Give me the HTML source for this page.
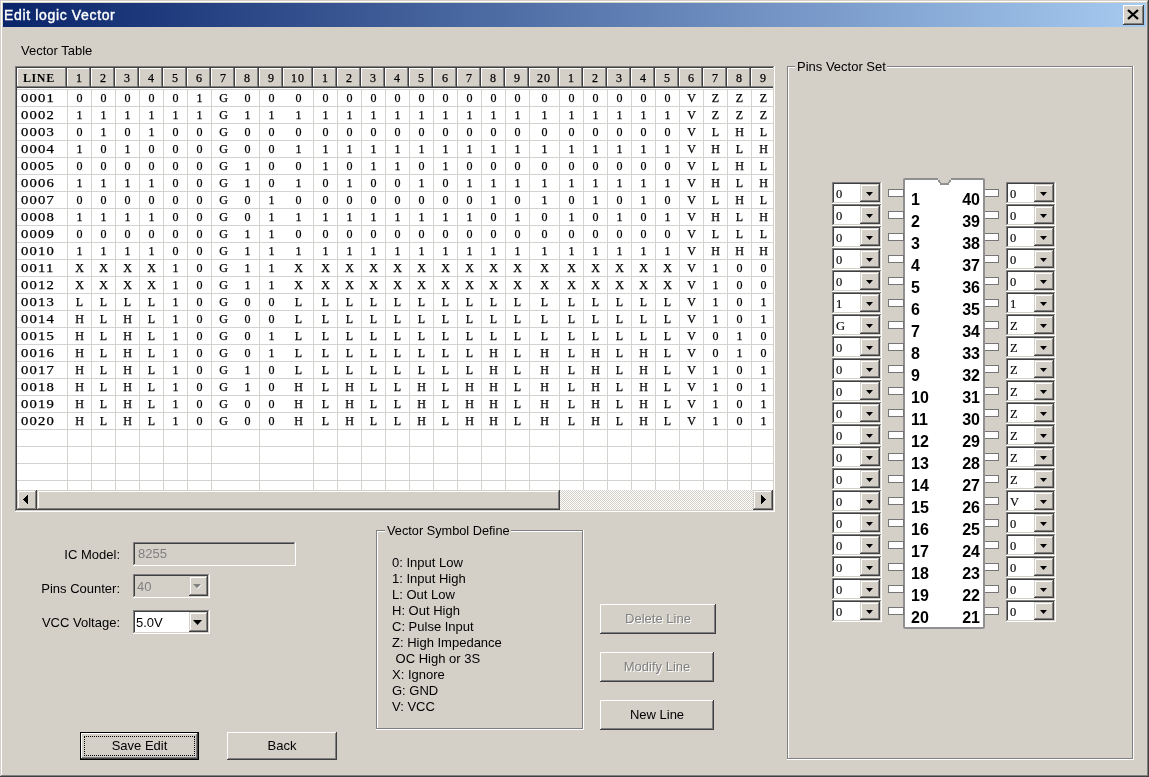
<!DOCTYPE html>
<html><head><meta charset="utf-8"><style>
html,body{margin:0;padding:0;}
body{will-change:transform;width:1149px;height:777px;overflow:hidden;position:relative;background:#d4d0c8;font-family:"Liberation Sans",sans-serif;}
div,svg{position:absolute;box-sizing:border-box;}
.k0{background:#d4d0c8;}
.k1{background:#ffffff;}
.k2{background:#808080;}
.k3{background:#404040;}
.k4{background:linear-gradient(to right,#0a246a,#a6caf0);}
.k5{font-family:'Liberation Sans';font-size:14px;line-height:14px;font-weight:normal;color:#fff;white-space:pre;letter-spacing:0.65px;-webkit-text-stroke:0.4px #fff;}
.k6{font-family:'Liberation Sans';font-size:13px;line-height:13px;font-weight:normal;color:#000;white-space:pre;}
.k7{background:#d3d3d0;}
.k8{font-family:'Liberation Serif';font-size:12px;line-height:12px;font-weight:bold;color:#000;white-space:pre;letter-spacing:0.6px;}
.k9{font-family:'Liberation Serif';font-size:12.0px;line-height:12.0px;font-weight:normal;color:#000;white-space:pre;width:24px;text-align:center;-webkit-text-stroke:0.25px #000;}
.k10{font-family:'Liberation Serif';font-size:12.0px;line-height:12.0px;font-weight:normal;color:#000;white-space:pre;width:30px;text-align:center;letter-spacing:1px;-webkit-text-stroke:0.25px #000;}
.k11{font-family:'Liberation Serif';font-size:12.0px;line-height:12.0px;font-weight:normal;color:#000;white-space:pre;letter-spacing:1.0px;transform:scaleX(1.22);transform-origin:0 0;-webkit-text-stroke:0.25px #000;}
.k12{font-family:'Liberation Serif';font-size:12.0px;line-height:12.0px;font-weight:normal;color:#000;white-space:pre;width:23px;text-align:center;-webkit-text-stroke:0.25px #000;}
.k13{font-family:'Liberation Serif';font-size:12.0px;line-height:12.0px;font-weight:normal;color:#000;white-space:pre;width:29px;text-align:center;-webkit-text-stroke:0.25px #000;}
.k14{background:#000;}
.k15{background:repeating-conic-gradient(#ffffff 0 25%,#d4d0c8 0 50%) 0 0/2px 2px;}
.k16{font-family:'Liberation Sans';font-size:13px;line-height:13px;font-weight:normal;color:#000;white-space:pre;width:120px;text-align:right;}
.k17{font-family:'Liberation Sans';font-size:13px;line-height:13px;font-weight:normal;color:#808080;white-space:pre;}
.k18{font-family:'Liberation Sans';font-size:12.75px;line-height:12.75px;font-weight:normal;color:#000;white-space:pre;}
.k19{font-family:'Liberation Sans';font-size:13px;line-height:13px;font-weight:normal;color:#fff;white-space:pre;width:116px;text-align:center;}
.k20{font-family:'Liberation Sans';font-size:13px;line-height:13px;font-weight:normal;color:#808080;white-space:pre;width:116px;text-align:center;}
.k21{font-family:'Liberation Sans';font-size:13px;line-height:13px;font-weight:normal;color:#fff;white-space:pre;width:114px;text-align:center;}
.k22{font-family:'Liberation Sans';font-size:13px;line-height:13px;font-weight:normal;color:#808080;white-space:pre;width:114px;text-align:center;}
.k23{font-family:'Liberation Sans';font-size:13px;line-height:13px;font-weight:normal;color:#000;white-space:pre;width:114px;text-align:center;}
.k24{font-family:'Liberation Sans';font-size:13px;line-height:13px;font-weight:normal;color:#000;white-space:pre;width:119px;text-align:center;}
.k25{font-family:'Liberation Sans';font-size:13px;line-height:13px;font-weight:normal;color:#000;white-space:pre;width:110px;text-align:center;}
.k26{background:#909090;border-radius:2px;}
.k27{background:#909090;}
.k28{background:#767676;}
.k29{font-family:'Liberation Sans';font-size:16px;line-height:16px;font-weight:bold;color:#000;white-space:pre;}
.k30{font-family:'Liberation Sans';font-size:16px;line-height:16px;font-weight:bold;color:#000;white-space:pre;width:40px;text-align:right;}
.k31{font-family:'Liberation Serif';font-size:12.5px;line-height:12.5px;font-weight:normal;color:#000;white-space:pre;-webkit-text-stroke:0.15px #000;}
</style></head><body>
<div class="k0" style="left:0px;top:0px;width:1149px;height:777px"></div>
<div class="k1" style="left:1px;top:1px;width:1146px;height:1px"></div>
<div class="k1" style="left:1px;top:1px;width:1px;height:775px"></div>
<div class="k2" style="left:1147px;top:1px;width:1px;height:775px"></div>
<div class="k2" style="left:1px;top:775px;width:1147px;height:1px"></div>
<div class="k3" style="left:1148px;top:0px;width:1px;height:777px"></div>
<div class="k3" style="left:0px;top:776px;width:1149px;height:1px"></div>
<div class="k4" style="left:3px;top:3px;width:1143px;height:24px"></div>
<div class="k5" style="left:4px;top:8.15px">Edit logic Vector</div>
<div class="k0" style="left:1123px;top:5px;width:21px;height:20px"></div>
<div class="k1" style="left:1123px;top:5px;width:21px;height:1px"></div>
<div class="k1" style="left:1123px;top:5px;width:1px;height:20px"></div>
<div class="k3" style="left:1123px;top:24px;width:21px;height:1px"></div>
<div class="k3" style="left:1143px;top:5px;width:1px;height:20px"></div>
<div class="k0" style="left:1124px;top:6px;width:19px;height:1px"></div>
<div class="k0" style="left:1124px;top:6px;width:1px;height:18px"></div>
<div class="k2" style="left:1124px;top:23px;width:19px;height:1px"></div>
<div class="k2" style="left:1142px;top:6px;width:1px;height:18px"></div>
<div class="k3" style="left:1123px;top:24px;width:21px;height:1px"></div>
<div class="k3" style="left:1143px;top:5px;width:1px;height:20px"></div>
<svg style="left:1127px;top:9px" width="12" height="11" viewBox="0 0 12 11"><path d="M1 1L11 10M11 1L1 10" stroke="#000" stroke-width="2.3"/></svg>
<div class="k6" style="left:21px;top:44px">Vector Table</div>
<div class="k1" style="left:15px;top:66px;width:760px;height:446px"></div>
<div class="k2" style="left:15px;top:66px;width:759px;height:1px"></div>
<div class="k2" style="left:15px;top:66px;width:1px;height:445px"></div>
<div class="k3" style="left:16px;top:67px;width:757px;height:1px"></div>
<div class="k3" style="left:16px;top:67px;width:1px;height:443px"></div>
<div class="k0" style="left:16px;top:510px;width:758px;height:1px"></div>
<div class="k0" style="left:773px;top:67px;width:1px;height:444px"></div>
<div class="k1" style="left:15px;top:511px;width:760px;height:1px"></div>
<div class="k1" style="left:774px;top:66px;width:1px;height:446px"></div>
<div style="left:17px;top:68px;width:756px;height:422px;overflow:hidden;">
<div class="k7" style="left:0px;top:21px;width:756px;height:1px"></div>
<div class="k7" style="left:0px;top:38px;width:756px;height:1px"></div>
<div class="k7" style="left:0px;top:55px;width:756px;height:1px"></div>
<div class="k7" style="left:0px;top:72px;width:756px;height:1px"></div>
<div class="k7" style="left:0px;top:89px;width:756px;height:1px"></div>
<div class="k7" style="left:0px;top:106px;width:756px;height:1px"></div>
<div class="k7" style="left:0px;top:123px;width:756px;height:1px"></div>
<div class="k7" style="left:0px;top:140px;width:756px;height:1px"></div>
<div class="k7" style="left:0px;top:157px;width:756px;height:1px"></div>
<div class="k7" style="left:0px;top:174px;width:756px;height:1px"></div>
<div class="k7" style="left:0px;top:191px;width:756px;height:1px"></div>
<div class="k7" style="left:0px;top:208px;width:756px;height:1px"></div>
<div class="k7" style="left:0px;top:225px;width:756px;height:1px"></div>
<div class="k7" style="left:0px;top:242px;width:756px;height:1px"></div>
<div class="k7" style="left:0px;top:259px;width:756px;height:1px"></div>
<div class="k7" style="left:0px;top:276px;width:756px;height:1px"></div>
<div class="k7" style="left:0px;top:293px;width:756px;height:1px"></div>
<div class="k7" style="left:0px;top:310px;width:756px;height:1px"></div>
<div class="k7" style="left:0px;top:327px;width:756px;height:1px"></div>
<div class="k7" style="left:0px;top:344px;width:756px;height:1px"></div>
<div class="k7" style="left:0px;top:361px;width:756px;height:1px"></div>
<div class="k7" style="left:0px;top:378px;width:756px;height:1px"></div>
<div class="k7" style="left:0px;top:395px;width:756px;height:1px"></div>
<div class="k7" style="left:0px;top:412px;width:756px;height:1px"></div>
<div class="k7" style="left:50px;top:21px;width:1px;height:422px"></div>
<div class="k7" style="left:74px;top:21px;width:1px;height:422px"></div>
<div class="k7" style="left:98px;top:21px;width:1px;height:422px"></div>
<div class="k7" style="left:122px;top:21px;width:1px;height:422px"></div>
<div class="k7" style="left:146px;top:21px;width:1px;height:422px"></div>
<div class="k7" style="left:170px;top:21px;width:1px;height:422px"></div>
<div class="k7" style="left:194px;top:21px;width:1px;height:422px"></div>
<div class="k7" style="left:242px;top:21px;width:1px;height:422px"></div>
<div class="k7" style="left:296px;top:21px;width:1px;height:422px"></div>
<div class="k7" style="left:320px;top:21px;width:1px;height:422px"></div>
<div class="k7" style="left:344px;top:21px;width:1px;height:422px"></div>
<div class="k7" style="left:368px;top:21px;width:1px;height:422px"></div>
<div class="k7" style="left:392px;top:21px;width:1px;height:422px"></div>
<div class="k7" style="left:416px;top:21px;width:1px;height:422px"></div>
<div class="k7" style="left:440px;top:21px;width:1px;height:422px"></div>
<div class="k7" style="left:464px;top:21px;width:1px;height:422px"></div>
<div class="k7" style="left:488px;top:21px;width:1px;height:422px"></div>
<div class="k7" style="left:512px;top:21px;width:1px;height:422px"></div>
<div class="k7" style="left:542px;top:21px;width:1px;height:422px"></div>
<div class="k7" style="left:566px;top:21px;width:1px;height:422px"></div>
<div class="k7" style="left:590px;top:21px;width:1px;height:422px"></div>
<div class="k7" style="left:614px;top:21px;width:1px;height:422px"></div>
<div class="k7" style="left:638px;top:21px;width:1px;height:422px"></div>
<div class="k7" style="left:662px;top:21px;width:1px;height:422px"></div>
<div class="k7" style="left:686px;top:21px;width:1px;height:422px"></div>
<div class="k7" style="left:710px;top:21px;width:1px;height:422px"></div>
<div class="k7" style="left:734px;top:21px;width:1px;height:422px"></div>
<div class="k0" style="left:0px;top:0px;width:50px;height:20px"></div>
<div class="k1" style="left:0px;top:0px;width:49px;height:1px"></div>
<div class="k1" style="left:0px;top:0px;width:1px;height:19px"></div>
<div class="k2" style="left:0px;top:18px;width:49px;height:1px"></div>
<div class="k2" style="left:48px;top:0px;width:1px;height:19px"></div>
<div class="k3" style="left:0px;top:19px;width:50px;height:1px"></div>
<div class="k3" style="left:49px;top:0px;width:1px;height:20px"></div>
<div class="k8" style="left:6px;top:3.95px">LINE</div>
<div class="k0" style="left:50px;top:0px;width:24px;height:20px"></div>
<div class="k1" style="left:50px;top:0px;width:23px;height:1px"></div>
<div class="k1" style="left:50px;top:0px;width:1px;height:19px"></div>
<div class="k2" style="left:50px;top:18px;width:23px;height:1px"></div>
<div class="k2" style="left:72px;top:0px;width:1px;height:19px"></div>
<div class="k3" style="left:50px;top:19px;width:24px;height:1px"></div>
<div class="k3" style="left:73px;top:0px;width:1px;height:20px"></div>
<div class="k9" style="left:50px;top:3.95px">1</div>
<div class="k0" style="left:74px;top:0px;width:24px;height:20px"></div>
<div class="k1" style="left:74px;top:0px;width:23px;height:1px"></div>
<div class="k1" style="left:74px;top:0px;width:1px;height:19px"></div>
<div class="k2" style="left:74px;top:18px;width:23px;height:1px"></div>
<div class="k2" style="left:96px;top:0px;width:1px;height:19px"></div>
<div class="k3" style="left:74px;top:19px;width:24px;height:1px"></div>
<div class="k3" style="left:97px;top:0px;width:1px;height:20px"></div>
<div class="k9" style="left:74px;top:3.95px">2</div>
<div class="k0" style="left:98px;top:0px;width:24px;height:20px"></div>
<div class="k1" style="left:98px;top:0px;width:23px;height:1px"></div>
<div class="k1" style="left:98px;top:0px;width:1px;height:19px"></div>
<div class="k2" style="left:98px;top:18px;width:23px;height:1px"></div>
<div class="k2" style="left:120px;top:0px;width:1px;height:19px"></div>
<div class="k3" style="left:98px;top:19px;width:24px;height:1px"></div>
<div class="k3" style="left:121px;top:0px;width:1px;height:20px"></div>
<div class="k9" style="left:98px;top:3.95px">3</div>
<div class="k0" style="left:122px;top:0px;width:24px;height:20px"></div>
<div class="k1" style="left:122px;top:0px;width:23px;height:1px"></div>
<div class="k1" style="left:122px;top:0px;width:1px;height:19px"></div>
<div class="k2" style="left:122px;top:18px;width:23px;height:1px"></div>
<div class="k2" style="left:144px;top:0px;width:1px;height:19px"></div>
<div class="k3" style="left:122px;top:19px;width:24px;height:1px"></div>
<div class="k3" style="left:145px;top:0px;width:1px;height:20px"></div>
<div class="k9" style="left:122px;top:3.95px">4</div>
<div class="k0" style="left:146px;top:0px;width:24px;height:20px"></div>
<div class="k1" style="left:146px;top:0px;width:23px;height:1px"></div>
<div class="k1" style="left:146px;top:0px;width:1px;height:19px"></div>
<div class="k2" style="left:146px;top:18px;width:23px;height:1px"></div>
<div class="k2" style="left:168px;top:0px;width:1px;height:19px"></div>
<div class="k3" style="left:146px;top:19px;width:24px;height:1px"></div>
<div class="k3" style="left:169px;top:0px;width:1px;height:20px"></div>
<div class="k9" style="left:146px;top:3.95px">5</div>
<div class="k0" style="left:170px;top:0px;width:24px;height:20px"></div>
<div class="k1" style="left:170px;top:0px;width:23px;height:1px"></div>
<div class="k1" style="left:170px;top:0px;width:1px;height:19px"></div>
<div class="k2" style="left:170px;top:18px;width:23px;height:1px"></div>
<div class="k2" style="left:192px;top:0px;width:1px;height:19px"></div>
<div class="k3" style="left:170px;top:19px;width:24px;height:1px"></div>
<div class="k3" style="left:193px;top:0px;width:1px;height:20px"></div>
<div class="k9" style="left:170px;top:3.95px">6</div>
<div class="k0" style="left:194px;top:0px;width:24px;height:20px"></div>
<div class="k1" style="left:194px;top:0px;width:23px;height:1px"></div>
<div class="k1" style="left:194px;top:0px;width:1px;height:19px"></div>
<div class="k2" style="left:194px;top:18px;width:23px;height:1px"></div>
<div class="k2" style="left:216px;top:0px;width:1px;height:19px"></div>
<div class="k3" style="left:194px;top:19px;width:24px;height:1px"></div>
<div class="k3" style="left:217px;top:0px;width:1px;height:20px"></div>
<div class="k9" style="left:194px;top:3.95px">7</div>
<div class="k0" style="left:218px;top:0px;width:24px;height:20px"></div>
<div class="k1" style="left:218px;top:0px;width:23px;height:1px"></div>
<div class="k1" style="left:218px;top:0px;width:1px;height:19px"></div>
<div class="k2" style="left:218px;top:18px;width:23px;height:1px"></div>
<div class="k2" style="left:240px;top:0px;width:1px;height:19px"></div>
<div class="k3" style="left:218px;top:19px;width:24px;height:1px"></div>
<div class="k3" style="left:241px;top:0px;width:1px;height:20px"></div>
<div class="k9" style="left:218px;top:3.95px">8</div>
<div class="k0" style="left:242px;top:0px;width:24px;height:20px"></div>
<div class="k1" style="left:242px;top:0px;width:23px;height:1px"></div>
<div class="k1" style="left:242px;top:0px;width:1px;height:19px"></div>
<div class="k2" style="left:242px;top:18px;width:23px;height:1px"></div>
<div class="k2" style="left:264px;top:0px;width:1px;height:19px"></div>
<div class="k3" style="left:242px;top:19px;width:24px;height:1px"></div>
<div class="k3" style="left:265px;top:0px;width:1px;height:20px"></div>
<div class="k9" style="left:242px;top:3.95px">9</div>
<div class="k0" style="left:266px;top:0px;width:30px;height:20px"></div>
<div class="k1" style="left:266px;top:0px;width:29px;height:1px"></div>
<div class="k1" style="left:266px;top:0px;width:1px;height:19px"></div>
<div class="k2" style="left:266px;top:18px;width:29px;height:1px"></div>
<div class="k2" style="left:294px;top:0px;width:1px;height:19px"></div>
<div class="k3" style="left:266px;top:19px;width:30px;height:1px"></div>
<div class="k3" style="left:295px;top:0px;width:1px;height:20px"></div>
<div class="k10" style="left:266px;top:3.95px">10</div>
<div class="k0" style="left:296px;top:0px;width:24px;height:20px"></div>
<div class="k1" style="left:296px;top:0px;width:23px;height:1px"></div>
<div class="k1" style="left:296px;top:0px;width:1px;height:19px"></div>
<div class="k2" style="left:296px;top:18px;width:23px;height:1px"></div>
<div class="k2" style="left:318px;top:0px;width:1px;height:19px"></div>
<div class="k3" style="left:296px;top:19px;width:24px;height:1px"></div>
<div class="k3" style="left:319px;top:0px;width:1px;height:20px"></div>
<div class="k9" style="left:296px;top:3.95px">1</div>
<div class="k0" style="left:320px;top:0px;width:24px;height:20px"></div>
<div class="k1" style="left:320px;top:0px;width:23px;height:1px"></div>
<div class="k1" style="left:320px;top:0px;width:1px;height:19px"></div>
<div class="k2" style="left:320px;top:18px;width:23px;height:1px"></div>
<div class="k2" style="left:342px;top:0px;width:1px;height:19px"></div>
<div class="k3" style="left:320px;top:19px;width:24px;height:1px"></div>
<div class="k3" style="left:343px;top:0px;width:1px;height:20px"></div>
<div class="k9" style="left:320px;top:3.95px">2</div>
<div class="k0" style="left:344px;top:0px;width:24px;height:20px"></div>
<div class="k1" style="left:344px;top:0px;width:23px;height:1px"></div>
<div class="k1" style="left:344px;top:0px;width:1px;height:19px"></div>
<div class="k2" style="left:344px;top:18px;width:23px;height:1px"></div>
<div class="k2" style="left:366px;top:0px;width:1px;height:19px"></div>
<div class="k3" style="left:344px;top:19px;width:24px;height:1px"></div>
<div class="k3" style="left:367px;top:0px;width:1px;height:20px"></div>
<div class="k9" style="left:344px;top:3.95px">3</div>
<div class="k0" style="left:368px;top:0px;width:24px;height:20px"></div>
<div class="k1" style="left:368px;top:0px;width:23px;height:1px"></div>
<div class="k1" style="left:368px;top:0px;width:1px;height:19px"></div>
<div class="k2" style="left:368px;top:18px;width:23px;height:1px"></div>
<div class="k2" style="left:390px;top:0px;width:1px;height:19px"></div>
<div class="k3" style="left:368px;top:19px;width:24px;height:1px"></div>
<div class="k3" style="left:391px;top:0px;width:1px;height:20px"></div>
<div class="k9" style="left:368px;top:3.95px">4</div>
<div class="k0" style="left:392px;top:0px;width:24px;height:20px"></div>
<div class="k1" style="left:392px;top:0px;width:23px;height:1px"></div>
<div class="k1" style="left:392px;top:0px;width:1px;height:19px"></div>
<div class="k2" style="left:392px;top:18px;width:23px;height:1px"></div>
<div class="k2" style="left:414px;top:0px;width:1px;height:19px"></div>
<div class="k3" style="left:392px;top:19px;width:24px;height:1px"></div>
<div class="k3" style="left:415px;top:0px;width:1px;height:20px"></div>
<div class="k9" style="left:392px;top:3.95px">5</div>
<div class="k0" style="left:416px;top:0px;width:24px;height:20px"></div>
<div class="k1" style="left:416px;top:0px;width:23px;height:1px"></div>
<div class="k1" style="left:416px;top:0px;width:1px;height:19px"></div>
<div class="k2" style="left:416px;top:18px;width:23px;height:1px"></div>
<div class="k2" style="left:438px;top:0px;width:1px;height:19px"></div>
<div class="k3" style="left:416px;top:19px;width:24px;height:1px"></div>
<div class="k3" style="left:439px;top:0px;width:1px;height:20px"></div>
<div class="k9" style="left:416px;top:3.95px">6</div>
<div class="k0" style="left:440px;top:0px;width:24px;height:20px"></div>
<div class="k1" style="left:440px;top:0px;width:23px;height:1px"></div>
<div class="k1" style="left:440px;top:0px;width:1px;height:19px"></div>
<div class="k2" style="left:440px;top:18px;width:23px;height:1px"></div>
<div class="k2" style="left:462px;top:0px;width:1px;height:19px"></div>
<div class="k3" style="left:440px;top:19px;width:24px;height:1px"></div>
<div class="k3" style="left:463px;top:0px;width:1px;height:20px"></div>
<div class="k9" style="left:440px;top:3.95px">7</div>
<div class="k0" style="left:464px;top:0px;width:24px;height:20px"></div>
<div class="k1" style="left:464px;top:0px;width:23px;height:1px"></div>
<div class="k1" style="left:464px;top:0px;width:1px;height:19px"></div>
<div class="k2" style="left:464px;top:18px;width:23px;height:1px"></div>
<div class="k2" style="left:486px;top:0px;width:1px;height:19px"></div>
<div class="k3" style="left:464px;top:19px;width:24px;height:1px"></div>
<div class="k3" style="left:487px;top:0px;width:1px;height:20px"></div>
<div class="k9" style="left:464px;top:3.95px">8</div>
<div class="k0" style="left:488px;top:0px;width:24px;height:20px"></div>
<div class="k1" style="left:488px;top:0px;width:23px;height:1px"></div>
<div class="k1" style="left:488px;top:0px;width:1px;height:19px"></div>
<div class="k2" style="left:488px;top:18px;width:23px;height:1px"></div>
<div class="k2" style="left:510px;top:0px;width:1px;height:19px"></div>
<div class="k3" style="left:488px;top:19px;width:24px;height:1px"></div>
<div class="k3" style="left:511px;top:0px;width:1px;height:20px"></div>
<div class="k9" style="left:488px;top:3.95px">9</div>
<div class="k0" style="left:512px;top:0px;width:30px;height:20px"></div>
<div class="k1" style="left:512px;top:0px;width:29px;height:1px"></div>
<div class="k1" style="left:512px;top:0px;width:1px;height:19px"></div>
<div class="k2" style="left:512px;top:18px;width:29px;height:1px"></div>
<div class="k2" style="left:540px;top:0px;width:1px;height:19px"></div>
<div class="k3" style="left:512px;top:19px;width:30px;height:1px"></div>
<div class="k3" style="left:541px;top:0px;width:1px;height:20px"></div>
<div class="k10" style="left:512px;top:3.95px">20</div>
<div class="k0" style="left:542px;top:0px;width:24px;height:20px"></div>
<div class="k1" style="left:542px;top:0px;width:23px;height:1px"></div>
<div class="k1" style="left:542px;top:0px;width:1px;height:19px"></div>
<div class="k2" style="left:542px;top:18px;width:23px;height:1px"></div>
<div class="k2" style="left:564px;top:0px;width:1px;height:19px"></div>
<div class="k3" style="left:542px;top:19px;width:24px;height:1px"></div>
<div class="k3" style="left:565px;top:0px;width:1px;height:20px"></div>
<div class="k9" style="left:542px;top:3.95px">1</div>
<div class="k0" style="left:566px;top:0px;width:24px;height:20px"></div>
<div class="k1" style="left:566px;top:0px;width:23px;height:1px"></div>
<div class="k1" style="left:566px;top:0px;width:1px;height:19px"></div>
<div class="k2" style="left:566px;top:18px;width:23px;height:1px"></div>
<div class="k2" style="left:588px;top:0px;width:1px;height:19px"></div>
<div class="k3" style="left:566px;top:19px;width:24px;height:1px"></div>
<div class="k3" style="left:589px;top:0px;width:1px;height:20px"></div>
<div class="k9" style="left:566px;top:3.95px">2</div>
<div class="k0" style="left:590px;top:0px;width:24px;height:20px"></div>
<div class="k1" style="left:590px;top:0px;width:23px;height:1px"></div>
<div class="k1" style="left:590px;top:0px;width:1px;height:19px"></div>
<div class="k2" style="left:590px;top:18px;width:23px;height:1px"></div>
<div class="k2" style="left:612px;top:0px;width:1px;height:19px"></div>
<div class="k3" style="left:590px;top:19px;width:24px;height:1px"></div>
<div class="k3" style="left:613px;top:0px;width:1px;height:20px"></div>
<div class="k9" style="left:590px;top:3.95px">3</div>
<div class="k0" style="left:614px;top:0px;width:24px;height:20px"></div>
<div class="k1" style="left:614px;top:0px;width:23px;height:1px"></div>
<div class="k1" style="left:614px;top:0px;width:1px;height:19px"></div>
<div class="k2" style="left:614px;top:18px;width:23px;height:1px"></div>
<div class="k2" style="left:636px;top:0px;width:1px;height:19px"></div>
<div class="k3" style="left:614px;top:19px;width:24px;height:1px"></div>
<div class="k3" style="left:637px;top:0px;width:1px;height:20px"></div>
<div class="k9" style="left:614px;top:3.95px">4</div>
<div class="k0" style="left:638px;top:0px;width:24px;height:20px"></div>
<div class="k1" style="left:638px;top:0px;width:23px;height:1px"></div>
<div class="k1" style="left:638px;top:0px;width:1px;height:19px"></div>
<div class="k2" style="left:638px;top:18px;width:23px;height:1px"></div>
<div class="k2" style="left:660px;top:0px;width:1px;height:19px"></div>
<div class="k3" style="left:638px;top:19px;width:24px;height:1px"></div>
<div class="k3" style="left:661px;top:0px;width:1px;height:20px"></div>
<div class="k9" style="left:638px;top:3.95px">5</div>
<div class="k0" style="left:662px;top:0px;width:24px;height:20px"></div>
<div class="k1" style="left:662px;top:0px;width:23px;height:1px"></div>
<div class="k1" style="left:662px;top:0px;width:1px;height:19px"></div>
<div class="k2" style="left:662px;top:18px;width:23px;height:1px"></div>
<div class="k2" style="left:684px;top:0px;width:1px;height:19px"></div>
<div class="k3" style="left:662px;top:19px;width:24px;height:1px"></div>
<div class="k3" style="left:685px;top:0px;width:1px;height:20px"></div>
<div class="k9" style="left:662px;top:3.95px">6</div>
<div class="k0" style="left:686px;top:0px;width:24px;height:20px"></div>
<div class="k1" style="left:686px;top:0px;width:23px;height:1px"></div>
<div class="k1" style="left:686px;top:0px;width:1px;height:19px"></div>
<div class="k2" style="left:686px;top:18px;width:23px;height:1px"></div>
<div class="k2" style="left:708px;top:0px;width:1px;height:19px"></div>
<div class="k3" style="left:686px;top:19px;width:24px;height:1px"></div>
<div class="k3" style="left:709px;top:0px;width:1px;height:20px"></div>
<div class="k9" style="left:686px;top:3.95px">7</div>
<div class="k0" style="left:710px;top:0px;width:24px;height:20px"></div>
<div class="k1" style="left:710px;top:0px;width:23px;height:1px"></div>
<div class="k1" style="left:710px;top:0px;width:1px;height:19px"></div>
<div class="k2" style="left:710px;top:18px;width:23px;height:1px"></div>
<div class="k2" style="left:732px;top:0px;width:1px;height:19px"></div>
<div class="k3" style="left:710px;top:19px;width:24px;height:1px"></div>
<div class="k3" style="left:733px;top:0px;width:1px;height:20px"></div>
<div class="k9" style="left:710px;top:3.95px">8</div>
<div class="k0" style="left:734px;top:0px;width:24px;height:20px"></div>
<div class="k1" style="left:734px;top:0px;width:23px;height:1px"></div>
<div class="k1" style="left:734px;top:0px;width:1px;height:19px"></div>
<div class="k2" style="left:734px;top:18px;width:23px;height:1px"></div>
<div class="k2" style="left:756px;top:0px;width:1px;height:19px"></div>
<div class="k3" style="left:734px;top:19px;width:24px;height:1px"></div>
<div class="k3" style="left:757px;top:0px;width:1px;height:20px"></div>
<div class="k9" style="left:734px;top:3.95px">9</div>
<div class="k11" style="left:4px;top:23.95px">0001</div>
<div class="k12" style="left:51px;top:23.95px">0</div>
<div class="k12" style="left:75px;top:23.95px">0</div>
<div class="k12" style="left:99px;top:23.95px">0</div>
<div class="k12" style="left:123px;top:23.95px">0</div>
<div class="k12" style="left:147px;top:23.95px">0</div>
<div class="k12" style="left:171px;top:23.95px">1</div>
<div class="k12" style="left:195px;top:23.95px">G</div>
<div class="k12" style="left:219px;top:23.95px">0</div>
<div class="k12" style="left:243px;top:23.95px">0</div>
<div class="k13" style="left:267px;top:23.95px">0</div>
<div class="k12" style="left:297px;top:23.95px">0</div>
<div class="k12" style="left:321px;top:23.95px">0</div>
<div class="k12" style="left:345px;top:23.95px">0</div>
<div class="k12" style="left:369px;top:23.95px">0</div>
<div class="k12" style="left:393px;top:23.95px">0</div>
<div class="k12" style="left:417px;top:23.95px">0</div>
<div class="k12" style="left:441px;top:23.95px">0</div>
<div class="k12" style="left:465px;top:23.95px">0</div>
<div class="k12" style="left:489px;top:23.95px">0</div>
<div class="k13" style="left:513px;top:23.95px">0</div>
<div class="k12" style="left:543px;top:23.95px">0</div>
<div class="k12" style="left:567px;top:23.95px">0</div>
<div class="k12" style="left:591px;top:23.95px">0</div>
<div class="k12" style="left:615px;top:23.95px">0</div>
<div class="k12" style="left:639px;top:23.95px">0</div>
<div class="k12" style="left:663px;top:23.95px">V</div>
<div class="k12" style="left:687px;top:23.95px">Z</div>
<div class="k12" style="left:711px;top:23.95px">Z</div>
<div class="k12" style="left:735px;top:23.95px">Z</div>
<div class="k11" style="left:4px;top:40.95px">0002</div>
<div class="k12" style="left:51px;top:40.95px">1</div>
<div class="k12" style="left:75px;top:40.95px">1</div>
<div class="k12" style="left:99px;top:40.95px">1</div>
<div class="k12" style="left:123px;top:40.95px">1</div>
<div class="k12" style="left:147px;top:40.95px">1</div>
<div class="k12" style="left:171px;top:40.95px">1</div>
<div class="k12" style="left:195px;top:40.95px">G</div>
<div class="k12" style="left:219px;top:40.95px">1</div>
<div class="k12" style="left:243px;top:40.95px">1</div>
<div class="k13" style="left:267px;top:40.95px">1</div>
<div class="k12" style="left:297px;top:40.95px">1</div>
<div class="k12" style="left:321px;top:40.95px">1</div>
<div class="k12" style="left:345px;top:40.95px">1</div>
<div class="k12" style="left:369px;top:40.95px">1</div>
<div class="k12" style="left:393px;top:40.95px">1</div>
<div class="k12" style="left:417px;top:40.95px">1</div>
<div class="k12" style="left:441px;top:40.95px">1</div>
<div class="k12" style="left:465px;top:40.95px">1</div>
<div class="k12" style="left:489px;top:40.95px">1</div>
<div class="k13" style="left:513px;top:40.95px">1</div>
<div class="k12" style="left:543px;top:40.95px">1</div>
<div class="k12" style="left:567px;top:40.95px">1</div>
<div class="k12" style="left:591px;top:40.95px">1</div>
<div class="k12" style="left:615px;top:40.95px">1</div>
<div class="k12" style="left:639px;top:40.95px">1</div>
<div class="k12" style="left:663px;top:40.95px">V</div>
<div class="k12" style="left:687px;top:40.95px">Z</div>
<div class="k12" style="left:711px;top:40.95px">Z</div>
<div class="k12" style="left:735px;top:40.95px">Z</div>
<div class="k11" style="left:4px;top:57.95px">0003</div>
<div class="k12" style="left:51px;top:57.95px">0</div>
<div class="k12" style="left:75px;top:57.95px">1</div>
<div class="k12" style="left:99px;top:57.95px">0</div>
<div class="k12" style="left:123px;top:57.95px">1</div>
<div class="k12" style="left:147px;top:57.95px">0</div>
<div class="k12" style="left:171px;top:57.95px">0</div>
<div class="k12" style="left:195px;top:57.95px">G</div>
<div class="k12" style="left:219px;top:57.95px">0</div>
<div class="k12" style="left:243px;top:57.95px">0</div>
<div class="k13" style="left:267px;top:57.95px">0</div>
<div class="k12" style="left:297px;top:57.95px">0</div>
<div class="k12" style="left:321px;top:57.95px">0</div>
<div class="k12" style="left:345px;top:57.95px">0</div>
<div class="k12" style="left:369px;top:57.95px">0</div>
<div class="k12" style="left:393px;top:57.95px">0</div>
<div class="k12" style="left:417px;top:57.95px">0</div>
<div class="k12" style="left:441px;top:57.95px">0</div>
<div class="k12" style="left:465px;top:57.95px">0</div>
<div class="k12" style="left:489px;top:57.95px">0</div>
<div class="k13" style="left:513px;top:57.95px">0</div>
<div class="k12" style="left:543px;top:57.95px">0</div>
<div class="k12" style="left:567px;top:57.95px">0</div>
<div class="k12" style="left:591px;top:57.95px">0</div>
<div class="k12" style="left:615px;top:57.95px">0</div>
<div class="k12" style="left:639px;top:57.95px">0</div>
<div class="k12" style="left:663px;top:57.95px">V</div>
<div class="k12" style="left:687px;top:57.95px">L</div>
<div class="k12" style="left:711px;top:57.95px">H</div>
<div class="k12" style="left:735px;top:57.95px">L</div>
<div class="k11" style="left:4px;top:74.95px">0004</div>
<div class="k12" style="left:51px;top:74.95px">1</div>
<div class="k12" style="left:75px;top:74.95px">0</div>
<div class="k12" style="left:99px;top:74.95px">1</div>
<div class="k12" style="left:123px;top:74.95px">0</div>
<div class="k12" style="left:147px;top:74.95px">0</div>
<div class="k12" style="left:171px;top:74.95px">0</div>
<div class="k12" style="left:195px;top:74.95px">G</div>
<div class="k12" style="left:219px;top:74.95px">0</div>
<div class="k12" style="left:243px;top:74.95px">0</div>
<div class="k13" style="left:267px;top:74.95px">1</div>
<div class="k12" style="left:297px;top:74.95px">1</div>
<div class="k12" style="left:321px;top:74.95px">1</div>
<div class="k12" style="left:345px;top:74.95px">1</div>
<div class="k12" style="left:369px;top:74.95px">1</div>
<div class="k12" style="left:393px;top:74.95px">1</div>
<div class="k12" style="left:417px;top:74.95px">1</div>
<div class="k12" style="left:441px;top:74.95px">1</div>
<div class="k12" style="left:465px;top:74.95px">1</div>
<div class="k12" style="left:489px;top:74.95px">1</div>
<div class="k13" style="left:513px;top:74.95px">1</div>
<div class="k12" style="left:543px;top:74.95px">1</div>
<div class="k12" style="left:567px;top:74.95px">1</div>
<div class="k12" style="left:591px;top:74.95px">1</div>
<div class="k12" style="left:615px;top:74.95px">1</div>
<div class="k12" style="left:639px;top:74.95px">1</div>
<div class="k12" style="left:663px;top:74.95px">V</div>
<div class="k12" style="left:687px;top:74.95px">H</div>
<div class="k12" style="left:711px;top:74.95px">L</div>
<div class="k12" style="left:735px;top:74.95px">H</div>
<div class="k11" style="left:4px;top:91.95px">0005</div>
<div class="k12" style="left:51px;top:91.95px">0</div>
<div class="k12" style="left:75px;top:91.95px">0</div>
<div class="k12" style="left:99px;top:91.95px">0</div>
<div class="k12" style="left:123px;top:91.95px">0</div>
<div class="k12" style="left:147px;top:91.95px">0</div>
<div class="k12" style="left:171px;top:91.95px">0</div>
<div class="k12" style="left:195px;top:91.95px">G</div>
<div class="k12" style="left:219px;top:91.95px">1</div>
<div class="k12" style="left:243px;top:91.95px">0</div>
<div class="k13" style="left:267px;top:91.95px">0</div>
<div class="k12" style="left:297px;top:91.95px">1</div>
<div class="k12" style="left:321px;top:91.95px">0</div>
<div class="k12" style="left:345px;top:91.95px">1</div>
<div class="k12" style="left:369px;top:91.95px">1</div>
<div class="k12" style="left:393px;top:91.95px">0</div>
<div class="k12" style="left:417px;top:91.95px">1</div>
<div class="k12" style="left:441px;top:91.95px">0</div>
<div class="k12" style="left:465px;top:91.95px">0</div>
<div class="k12" style="left:489px;top:91.95px">0</div>
<div class="k13" style="left:513px;top:91.95px">0</div>
<div class="k12" style="left:543px;top:91.95px">0</div>
<div class="k12" style="left:567px;top:91.95px">0</div>
<div class="k12" style="left:591px;top:91.95px">0</div>
<div class="k12" style="left:615px;top:91.95px">0</div>
<div class="k12" style="left:639px;top:91.95px">0</div>
<div class="k12" style="left:663px;top:91.95px">V</div>
<div class="k12" style="left:687px;top:91.95px">L</div>
<div class="k12" style="left:711px;top:91.95px">H</div>
<div class="k12" style="left:735px;top:91.95px">L</div>
<div class="k11" style="left:4px;top:108.95px">0006</div>
<div class="k12" style="left:51px;top:108.95px">1</div>
<div class="k12" style="left:75px;top:108.95px">1</div>
<div class="k12" style="left:99px;top:108.95px">1</div>
<div class="k12" style="left:123px;top:108.95px">1</div>
<div class="k12" style="left:147px;top:108.95px">0</div>
<div class="k12" style="left:171px;top:108.95px">0</div>
<div class="k12" style="left:195px;top:108.95px">G</div>
<div class="k12" style="left:219px;top:108.95px">1</div>
<div class="k12" style="left:243px;top:108.95px">0</div>
<div class="k13" style="left:267px;top:108.95px">1</div>
<div class="k12" style="left:297px;top:108.95px">0</div>
<div class="k12" style="left:321px;top:108.95px">1</div>
<div class="k12" style="left:345px;top:108.95px">0</div>
<div class="k12" style="left:369px;top:108.95px">0</div>
<div class="k12" style="left:393px;top:108.95px">1</div>
<div class="k12" style="left:417px;top:108.95px">0</div>
<div class="k12" style="left:441px;top:108.95px">1</div>
<div class="k12" style="left:465px;top:108.95px">1</div>
<div class="k12" style="left:489px;top:108.95px">1</div>
<div class="k13" style="left:513px;top:108.95px">1</div>
<div class="k12" style="left:543px;top:108.95px">1</div>
<div class="k12" style="left:567px;top:108.95px">1</div>
<div class="k12" style="left:591px;top:108.95px">1</div>
<div class="k12" style="left:615px;top:108.95px">1</div>
<div class="k12" style="left:639px;top:108.95px">1</div>
<div class="k12" style="left:663px;top:108.95px">V</div>
<div class="k12" style="left:687px;top:108.95px">H</div>
<div class="k12" style="left:711px;top:108.95px">L</div>
<div class="k12" style="left:735px;top:108.95px">H</div>
<div class="k11" style="left:4px;top:125.95px">0007</div>
<div class="k12" style="left:51px;top:125.95px">0</div>
<div class="k12" style="left:75px;top:125.95px">0</div>
<div class="k12" style="left:99px;top:125.95px">0</div>
<div class="k12" style="left:123px;top:125.95px">0</div>
<div class="k12" style="left:147px;top:125.95px">0</div>
<div class="k12" style="left:171px;top:125.95px">0</div>
<div class="k12" style="left:195px;top:125.95px">G</div>
<div class="k12" style="left:219px;top:125.95px">0</div>
<div class="k12" style="left:243px;top:125.95px">1</div>
<div class="k13" style="left:267px;top:125.95px">0</div>
<div class="k12" style="left:297px;top:125.95px">0</div>
<div class="k12" style="left:321px;top:125.95px">0</div>
<div class="k12" style="left:345px;top:125.95px">0</div>
<div class="k12" style="left:369px;top:125.95px">0</div>
<div class="k12" style="left:393px;top:125.95px">0</div>
<div class="k12" style="left:417px;top:125.95px">0</div>
<div class="k12" style="left:441px;top:125.95px">0</div>
<div class="k12" style="left:465px;top:125.95px">1</div>
<div class="k12" style="left:489px;top:125.95px">0</div>
<div class="k13" style="left:513px;top:125.95px">1</div>
<div class="k12" style="left:543px;top:125.95px">0</div>
<div class="k12" style="left:567px;top:125.95px">1</div>
<div class="k12" style="left:591px;top:125.95px">0</div>
<div class="k12" style="left:615px;top:125.95px">1</div>
<div class="k12" style="left:639px;top:125.95px">0</div>
<div class="k12" style="left:663px;top:125.95px">V</div>
<div class="k12" style="left:687px;top:125.95px">L</div>
<div class="k12" style="left:711px;top:125.95px">H</div>
<div class="k12" style="left:735px;top:125.95px">L</div>
<div class="k11" style="left:4px;top:142.95px">0008</div>
<div class="k12" style="left:51px;top:142.95px">1</div>
<div class="k12" style="left:75px;top:142.95px">1</div>
<div class="k12" style="left:99px;top:142.95px">1</div>
<div class="k12" style="left:123px;top:142.95px">1</div>
<div class="k12" style="left:147px;top:142.95px">0</div>
<div class="k12" style="left:171px;top:142.95px">0</div>
<div class="k12" style="left:195px;top:142.95px">G</div>
<div class="k12" style="left:219px;top:142.95px">0</div>
<div class="k12" style="left:243px;top:142.95px">1</div>
<div class="k13" style="left:267px;top:142.95px">1</div>
<div class="k12" style="left:297px;top:142.95px">1</div>
<div class="k12" style="left:321px;top:142.95px">1</div>
<div class="k12" style="left:345px;top:142.95px">1</div>
<div class="k12" style="left:369px;top:142.95px">1</div>
<div class="k12" style="left:393px;top:142.95px">1</div>
<div class="k12" style="left:417px;top:142.95px">1</div>
<div class="k12" style="left:441px;top:142.95px">1</div>
<div class="k12" style="left:465px;top:142.95px">0</div>
<div class="k12" style="left:489px;top:142.95px">1</div>
<div class="k13" style="left:513px;top:142.95px">0</div>
<div class="k12" style="left:543px;top:142.95px">1</div>
<div class="k12" style="left:567px;top:142.95px">0</div>
<div class="k12" style="left:591px;top:142.95px">1</div>
<div class="k12" style="left:615px;top:142.95px">0</div>
<div class="k12" style="left:639px;top:142.95px">1</div>
<div class="k12" style="left:663px;top:142.95px">V</div>
<div class="k12" style="left:687px;top:142.95px">H</div>
<div class="k12" style="left:711px;top:142.95px">L</div>
<div class="k12" style="left:735px;top:142.95px">H</div>
<div class="k11" style="left:4px;top:159.95px">0009</div>
<div class="k12" style="left:51px;top:159.95px">0</div>
<div class="k12" style="left:75px;top:159.95px">0</div>
<div class="k12" style="left:99px;top:159.95px">0</div>
<div class="k12" style="left:123px;top:159.95px">0</div>
<div class="k12" style="left:147px;top:159.95px">0</div>
<div class="k12" style="left:171px;top:159.95px">0</div>
<div class="k12" style="left:195px;top:159.95px">G</div>
<div class="k12" style="left:219px;top:159.95px">1</div>
<div class="k12" style="left:243px;top:159.95px">1</div>
<div class="k13" style="left:267px;top:159.95px">0</div>
<div class="k12" style="left:297px;top:159.95px">0</div>
<div class="k12" style="left:321px;top:159.95px">0</div>
<div class="k12" style="left:345px;top:159.95px">0</div>
<div class="k12" style="left:369px;top:159.95px">0</div>
<div class="k12" style="left:393px;top:159.95px">0</div>
<div class="k12" style="left:417px;top:159.95px">0</div>
<div class="k12" style="left:441px;top:159.95px">0</div>
<div class="k12" style="left:465px;top:159.95px">0</div>
<div class="k12" style="left:489px;top:159.95px">0</div>
<div class="k13" style="left:513px;top:159.95px">0</div>
<div class="k12" style="left:543px;top:159.95px">0</div>
<div class="k12" style="left:567px;top:159.95px">0</div>
<div class="k12" style="left:591px;top:159.95px">0</div>
<div class="k12" style="left:615px;top:159.95px">0</div>
<div class="k12" style="left:639px;top:159.95px">0</div>
<div class="k12" style="left:663px;top:159.95px">V</div>
<div class="k12" style="left:687px;top:159.95px">L</div>
<div class="k12" style="left:711px;top:159.95px">L</div>
<div class="k12" style="left:735px;top:159.95px">L</div>
<div class="k11" style="left:4px;top:176.95px">0010</div>
<div class="k12" style="left:51px;top:176.95px">1</div>
<div class="k12" style="left:75px;top:176.95px">1</div>
<div class="k12" style="left:99px;top:176.95px">1</div>
<div class="k12" style="left:123px;top:176.95px">1</div>
<div class="k12" style="left:147px;top:176.95px">0</div>
<div class="k12" style="left:171px;top:176.95px">0</div>
<div class="k12" style="left:195px;top:176.95px">G</div>
<div class="k12" style="left:219px;top:176.95px">1</div>
<div class="k12" style="left:243px;top:176.95px">1</div>
<div class="k13" style="left:267px;top:176.95px">1</div>
<div class="k12" style="left:297px;top:176.95px">1</div>
<div class="k12" style="left:321px;top:176.95px">1</div>
<div class="k12" style="left:345px;top:176.95px">1</div>
<div class="k12" style="left:369px;top:176.95px">1</div>
<div class="k12" style="left:393px;top:176.95px">1</div>
<div class="k12" style="left:417px;top:176.95px">1</div>
<div class="k12" style="left:441px;top:176.95px">1</div>
<div class="k12" style="left:465px;top:176.95px">1</div>
<div class="k12" style="left:489px;top:176.95px">1</div>
<div class="k13" style="left:513px;top:176.95px">1</div>
<div class="k12" style="left:543px;top:176.95px">1</div>
<div class="k12" style="left:567px;top:176.95px">1</div>
<div class="k12" style="left:591px;top:176.95px">1</div>
<div class="k12" style="left:615px;top:176.95px">1</div>
<div class="k12" style="left:639px;top:176.95px">1</div>
<div class="k12" style="left:663px;top:176.95px">V</div>
<div class="k12" style="left:687px;top:176.95px">H</div>
<div class="k12" style="left:711px;top:176.95px">H</div>
<div class="k12" style="left:735px;top:176.95px">H</div>
<div class="k11" style="left:4px;top:193.95px">0011</div>
<div class="k12" style="left:51px;top:193.95px">X</div>
<div class="k12" style="left:75px;top:193.95px">X</div>
<div class="k12" style="left:99px;top:193.95px">X</div>
<div class="k12" style="left:123px;top:193.95px">X</div>
<div class="k12" style="left:147px;top:193.95px">1</div>
<div class="k12" style="left:171px;top:193.95px">0</div>
<div class="k12" style="left:195px;top:193.95px">G</div>
<div class="k12" style="left:219px;top:193.95px">1</div>
<div class="k12" style="left:243px;top:193.95px">1</div>
<div class="k13" style="left:267px;top:193.95px">X</div>
<div class="k12" style="left:297px;top:193.95px">X</div>
<div class="k12" style="left:321px;top:193.95px">X</div>
<div class="k12" style="left:345px;top:193.95px">X</div>
<div class="k12" style="left:369px;top:193.95px">X</div>
<div class="k12" style="left:393px;top:193.95px">X</div>
<div class="k12" style="left:417px;top:193.95px">X</div>
<div class="k12" style="left:441px;top:193.95px">X</div>
<div class="k12" style="left:465px;top:193.95px">X</div>
<div class="k12" style="left:489px;top:193.95px">X</div>
<div class="k13" style="left:513px;top:193.95px">X</div>
<div class="k12" style="left:543px;top:193.95px">X</div>
<div class="k12" style="left:567px;top:193.95px">X</div>
<div class="k12" style="left:591px;top:193.95px">X</div>
<div class="k12" style="left:615px;top:193.95px">X</div>
<div class="k12" style="left:639px;top:193.95px">X</div>
<div class="k12" style="left:663px;top:193.95px">V</div>
<div class="k12" style="left:687px;top:193.95px">1</div>
<div class="k12" style="left:711px;top:193.95px">0</div>
<div class="k12" style="left:735px;top:193.95px">0</div>
<div class="k11" style="left:4px;top:210.95px">0012</div>
<div class="k12" style="left:51px;top:210.95px">X</div>
<div class="k12" style="left:75px;top:210.95px">X</div>
<div class="k12" style="left:99px;top:210.95px">X</div>
<div class="k12" style="left:123px;top:210.95px">X</div>
<div class="k12" style="left:147px;top:210.95px">1</div>
<div class="k12" style="left:171px;top:210.95px">0</div>
<div class="k12" style="left:195px;top:210.95px">G</div>
<div class="k12" style="left:219px;top:210.95px">1</div>
<div class="k12" style="left:243px;top:210.95px">1</div>
<div class="k13" style="left:267px;top:210.95px">X</div>
<div class="k12" style="left:297px;top:210.95px">X</div>
<div class="k12" style="left:321px;top:210.95px">X</div>
<div class="k12" style="left:345px;top:210.95px">X</div>
<div class="k12" style="left:369px;top:210.95px">X</div>
<div class="k12" style="left:393px;top:210.95px">X</div>
<div class="k12" style="left:417px;top:210.95px">X</div>
<div class="k12" style="left:441px;top:210.95px">X</div>
<div class="k12" style="left:465px;top:210.95px">X</div>
<div class="k12" style="left:489px;top:210.95px">X</div>
<div class="k13" style="left:513px;top:210.95px">X</div>
<div class="k12" style="left:543px;top:210.95px">X</div>
<div class="k12" style="left:567px;top:210.95px">X</div>
<div class="k12" style="left:591px;top:210.95px">X</div>
<div class="k12" style="left:615px;top:210.95px">X</div>
<div class="k12" style="left:639px;top:210.95px">X</div>
<div class="k12" style="left:663px;top:210.95px">V</div>
<div class="k12" style="left:687px;top:210.95px">1</div>
<div class="k12" style="left:711px;top:210.95px">0</div>
<div class="k12" style="left:735px;top:210.95px">0</div>
<div class="k11" style="left:4px;top:227.95px">0013</div>
<div class="k12" style="left:51px;top:227.95px">L</div>
<div class="k12" style="left:75px;top:227.95px">L</div>
<div class="k12" style="left:99px;top:227.95px">L</div>
<div class="k12" style="left:123px;top:227.95px">L</div>
<div class="k12" style="left:147px;top:227.95px">1</div>
<div class="k12" style="left:171px;top:227.95px">0</div>
<div class="k12" style="left:195px;top:227.95px">G</div>
<div class="k12" style="left:219px;top:227.95px">0</div>
<div class="k12" style="left:243px;top:227.95px">0</div>
<div class="k13" style="left:267px;top:227.95px">L</div>
<div class="k12" style="left:297px;top:227.95px">L</div>
<div class="k12" style="left:321px;top:227.95px">L</div>
<div class="k12" style="left:345px;top:227.95px">L</div>
<div class="k12" style="left:369px;top:227.95px">L</div>
<div class="k12" style="left:393px;top:227.95px">L</div>
<div class="k12" style="left:417px;top:227.95px">L</div>
<div class="k12" style="left:441px;top:227.95px">L</div>
<div class="k12" style="left:465px;top:227.95px">L</div>
<div class="k12" style="left:489px;top:227.95px">L</div>
<div class="k13" style="left:513px;top:227.95px">L</div>
<div class="k12" style="left:543px;top:227.95px">L</div>
<div class="k12" style="left:567px;top:227.95px">L</div>
<div class="k12" style="left:591px;top:227.95px">L</div>
<div class="k12" style="left:615px;top:227.95px">L</div>
<div class="k12" style="left:639px;top:227.95px">L</div>
<div class="k12" style="left:663px;top:227.95px">V</div>
<div class="k12" style="left:687px;top:227.95px">1</div>
<div class="k12" style="left:711px;top:227.95px">0</div>
<div class="k12" style="left:735px;top:227.95px">1</div>
<div class="k11" style="left:4px;top:244.95px">0014</div>
<div class="k12" style="left:51px;top:244.95px">H</div>
<div class="k12" style="left:75px;top:244.95px">L</div>
<div class="k12" style="left:99px;top:244.95px">H</div>
<div class="k12" style="left:123px;top:244.95px">L</div>
<div class="k12" style="left:147px;top:244.95px">1</div>
<div class="k12" style="left:171px;top:244.95px">0</div>
<div class="k12" style="left:195px;top:244.95px">G</div>
<div class="k12" style="left:219px;top:244.95px">0</div>
<div class="k12" style="left:243px;top:244.95px">0</div>
<div class="k13" style="left:267px;top:244.95px">L</div>
<div class="k12" style="left:297px;top:244.95px">L</div>
<div class="k12" style="left:321px;top:244.95px">L</div>
<div class="k12" style="left:345px;top:244.95px">L</div>
<div class="k12" style="left:369px;top:244.95px">L</div>
<div class="k12" style="left:393px;top:244.95px">L</div>
<div class="k12" style="left:417px;top:244.95px">L</div>
<div class="k12" style="left:441px;top:244.95px">L</div>
<div class="k12" style="left:465px;top:244.95px">L</div>
<div class="k12" style="left:489px;top:244.95px">L</div>
<div class="k13" style="left:513px;top:244.95px">L</div>
<div class="k12" style="left:543px;top:244.95px">L</div>
<div class="k12" style="left:567px;top:244.95px">L</div>
<div class="k12" style="left:591px;top:244.95px">L</div>
<div class="k12" style="left:615px;top:244.95px">L</div>
<div class="k12" style="left:639px;top:244.95px">L</div>
<div class="k12" style="left:663px;top:244.95px">V</div>
<div class="k12" style="left:687px;top:244.95px">1</div>
<div class="k12" style="left:711px;top:244.95px">0</div>
<div class="k12" style="left:735px;top:244.95px">1</div>
<div class="k11" style="left:4px;top:261.95px">0015</div>
<div class="k12" style="left:51px;top:261.95px">H</div>
<div class="k12" style="left:75px;top:261.95px">L</div>
<div class="k12" style="left:99px;top:261.95px">H</div>
<div class="k12" style="left:123px;top:261.95px">L</div>
<div class="k12" style="left:147px;top:261.95px">1</div>
<div class="k12" style="left:171px;top:261.95px">0</div>
<div class="k12" style="left:195px;top:261.95px">G</div>
<div class="k12" style="left:219px;top:261.95px">0</div>
<div class="k12" style="left:243px;top:261.95px">1</div>
<div class="k13" style="left:267px;top:261.95px">L</div>
<div class="k12" style="left:297px;top:261.95px">L</div>
<div class="k12" style="left:321px;top:261.95px">L</div>
<div class="k12" style="left:345px;top:261.95px">L</div>
<div class="k12" style="left:369px;top:261.95px">L</div>
<div class="k12" style="left:393px;top:261.95px">L</div>
<div class="k12" style="left:417px;top:261.95px">L</div>
<div class="k12" style="left:441px;top:261.95px">L</div>
<div class="k12" style="left:465px;top:261.95px">L</div>
<div class="k12" style="left:489px;top:261.95px">L</div>
<div class="k13" style="left:513px;top:261.95px">L</div>
<div class="k12" style="left:543px;top:261.95px">L</div>
<div class="k12" style="left:567px;top:261.95px">L</div>
<div class="k12" style="left:591px;top:261.95px">L</div>
<div class="k12" style="left:615px;top:261.95px">L</div>
<div class="k12" style="left:639px;top:261.95px">L</div>
<div class="k12" style="left:663px;top:261.95px">V</div>
<div class="k12" style="left:687px;top:261.95px">0</div>
<div class="k12" style="left:711px;top:261.95px">1</div>
<div class="k12" style="left:735px;top:261.95px">0</div>
<div class="k11" style="left:4px;top:278.95px">0016</div>
<div class="k12" style="left:51px;top:278.95px">H</div>
<div class="k12" style="left:75px;top:278.95px">L</div>
<div class="k12" style="left:99px;top:278.95px">H</div>
<div class="k12" style="left:123px;top:278.95px">L</div>
<div class="k12" style="left:147px;top:278.95px">1</div>
<div class="k12" style="left:171px;top:278.95px">0</div>
<div class="k12" style="left:195px;top:278.95px">G</div>
<div class="k12" style="left:219px;top:278.95px">0</div>
<div class="k12" style="left:243px;top:278.95px">1</div>
<div class="k13" style="left:267px;top:278.95px">L</div>
<div class="k12" style="left:297px;top:278.95px">L</div>
<div class="k12" style="left:321px;top:278.95px">L</div>
<div class="k12" style="left:345px;top:278.95px">L</div>
<div class="k12" style="left:369px;top:278.95px">L</div>
<div class="k12" style="left:393px;top:278.95px">L</div>
<div class="k12" style="left:417px;top:278.95px">L</div>
<div class="k12" style="left:441px;top:278.95px">L</div>
<div class="k12" style="left:465px;top:278.95px">H</div>
<div class="k12" style="left:489px;top:278.95px">L</div>
<div class="k13" style="left:513px;top:278.95px">H</div>
<div class="k12" style="left:543px;top:278.95px">L</div>
<div class="k12" style="left:567px;top:278.95px">H</div>
<div class="k12" style="left:591px;top:278.95px">L</div>
<div class="k12" style="left:615px;top:278.95px">H</div>
<div class="k12" style="left:639px;top:278.95px">L</div>
<div class="k12" style="left:663px;top:278.95px">V</div>
<div class="k12" style="left:687px;top:278.95px">0</div>
<div class="k12" style="left:711px;top:278.95px">1</div>
<div class="k12" style="left:735px;top:278.95px">0</div>
<div class="k11" style="left:4px;top:295.95px">0017</div>
<div class="k12" style="left:51px;top:295.95px">H</div>
<div class="k12" style="left:75px;top:295.95px">L</div>
<div class="k12" style="left:99px;top:295.95px">H</div>
<div class="k12" style="left:123px;top:295.95px">L</div>
<div class="k12" style="left:147px;top:295.95px">1</div>
<div class="k12" style="left:171px;top:295.95px">0</div>
<div class="k12" style="left:195px;top:295.95px">G</div>
<div class="k12" style="left:219px;top:295.95px">1</div>
<div class="k12" style="left:243px;top:295.95px">0</div>
<div class="k13" style="left:267px;top:295.95px">L</div>
<div class="k12" style="left:297px;top:295.95px">L</div>
<div class="k12" style="left:321px;top:295.95px">L</div>
<div class="k12" style="left:345px;top:295.95px">L</div>
<div class="k12" style="left:369px;top:295.95px">L</div>
<div class="k12" style="left:393px;top:295.95px">L</div>
<div class="k12" style="left:417px;top:295.95px">L</div>
<div class="k12" style="left:441px;top:295.95px">L</div>
<div class="k12" style="left:465px;top:295.95px">H</div>
<div class="k12" style="left:489px;top:295.95px">L</div>
<div class="k13" style="left:513px;top:295.95px">H</div>
<div class="k12" style="left:543px;top:295.95px">L</div>
<div class="k12" style="left:567px;top:295.95px">H</div>
<div class="k12" style="left:591px;top:295.95px">L</div>
<div class="k12" style="left:615px;top:295.95px">H</div>
<div class="k12" style="left:639px;top:295.95px">L</div>
<div class="k12" style="left:663px;top:295.95px">V</div>
<div class="k12" style="left:687px;top:295.95px">1</div>
<div class="k12" style="left:711px;top:295.95px">0</div>
<div class="k12" style="left:735px;top:295.95px">1</div>
<div class="k11" style="left:4px;top:312.95px">0018</div>
<div class="k12" style="left:51px;top:312.95px">H</div>
<div class="k12" style="left:75px;top:312.95px">L</div>
<div class="k12" style="left:99px;top:312.95px">H</div>
<div class="k12" style="left:123px;top:312.95px">L</div>
<div class="k12" style="left:147px;top:312.95px">1</div>
<div class="k12" style="left:171px;top:312.95px">0</div>
<div class="k12" style="left:195px;top:312.95px">G</div>
<div class="k12" style="left:219px;top:312.95px">1</div>
<div class="k12" style="left:243px;top:312.95px">0</div>
<div class="k13" style="left:267px;top:312.95px">H</div>
<div class="k12" style="left:297px;top:312.95px">L</div>
<div class="k12" style="left:321px;top:312.95px">H</div>
<div class="k12" style="left:345px;top:312.95px">L</div>
<div class="k12" style="left:369px;top:312.95px">L</div>
<div class="k12" style="left:393px;top:312.95px">H</div>
<div class="k12" style="left:417px;top:312.95px">L</div>
<div class="k12" style="left:441px;top:312.95px">H</div>
<div class="k12" style="left:465px;top:312.95px">H</div>
<div class="k12" style="left:489px;top:312.95px">L</div>
<div class="k13" style="left:513px;top:312.95px">H</div>
<div class="k12" style="left:543px;top:312.95px">L</div>
<div class="k12" style="left:567px;top:312.95px">H</div>
<div class="k12" style="left:591px;top:312.95px">L</div>
<div class="k12" style="left:615px;top:312.95px">H</div>
<div class="k12" style="left:639px;top:312.95px">L</div>
<div class="k12" style="left:663px;top:312.95px">V</div>
<div class="k12" style="left:687px;top:312.95px">1</div>
<div class="k12" style="left:711px;top:312.95px">0</div>
<div class="k12" style="left:735px;top:312.95px">1</div>
<div class="k11" style="left:4px;top:329.95px">0019</div>
<div class="k12" style="left:51px;top:329.95px">H</div>
<div class="k12" style="left:75px;top:329.95px">L</div>
<div class="k12" style="left:99px;top:329.95px">H</div>
<div class="k12" style="left:123px;top:329.95px">L</div>
<div class="k12" style="left:147px;top:329.95px">1</div>
<div class="k12" style="left:171px;top:329.95px">0</div>
<div class="k12" style="left:195px;top:329.95px">G</div>
<div class="k12" style="left:219px;top:329.95px">0</div>
<div class="k12" style="left:243px;top:329.95px">0</div>
<div class="k13" style="left:267px;top:329.95px">H</div>
<div class="k12" style="left:297px;top:329.95px">L</div>
<div class="k12" style="left:321px;top:329.95px">H</div>
<div class="k12" style="left:345px;top:329.95px">L</div>
<div class="k12" style="left:369px;top:329.95px">L</div>
<div class="k12" style="left:393px;top:329.95px">H</div>
<div class="k12" style="left:417px;top:329.95px">L</div>
<div class="k12" style="left:441px;top:329.95px">H</div>
<div class="k12" style="left:465px;top:329.95px">H</div>
<div class="k12" style="left:489px;top:329.95px">L</div>
<div class="k13" style="left:513px;top:329.95px">H</div>
<div class="k12" style="left:543px;top:329.95px">L</div>
<div class="k12" style="left:567px;top:329.95px">H</div>
<div class="k12" style="left:591px;top:329.95px">L</div>
<div class="k12" style="left:615px;top:329.95px">H</div>
<div class="k12" style="left:639px;top:329.95px">L</div>
<div class="k12" style="left:663px;top:329.95px">V</div>
<div class="k12" style="left:687px;top:329.95px">1</div>
<div class="k12" style="left:711px;top:329.95px">0</div>
<div class="k12" style="left:735px;top:329.95px">1</div>
<div class="k11" style="left:4px;top:346.95px">0020</div>
<div class="k12" style="left:51px;top:346.95px">H</div>
<div class="k12" style="left:75px;top:346.95px">L</div>
<div class="k12" style="left:99px;top:346.95px">H</div>
<div class="k12" style="left:123px;top:346.95px">L</div>
<div class="k12" style="left:147px;top:346.95px">1</div>
<div class="k12" style="left:171px;top:346.95px">0</div>
<div class="k12" style="left:195px;top:346.95px">G</div>
<div class="k12" style="left:219px;top:346.95px">0</div>
<div class="k12" style="left:243px;top:346.95px">0</div>
<div class="k13" style="left:267px;top:346.95px">H</div>
<div class="k12" style="left:297px;top:346.95px">L</div>
<div class="k12" style="left:321px;top:346.95px">H</div>
<div class="k12" style="left:345px;top:346.95px">L</div>
<div class="k12" style="left:369px;top:346.95px">L</div>
<div class="k12" style="left:393px;top:346.95px">H</div>
<div class="k12" style="left:417px;top:346.95px">L</div>
<div class="k12" style="left:441px;top:346.95px">H</div>
<div class="k12" style="left:465px;top:346.95px">H</div>
<div class="k12" style="left:489px;top:346.95px">L</div>
<div class="k13" style="left:513px;top:346.95px">H</div>
<div class="k12" style="left:543px;top:346.95px">L</div>
<div class="k12" style="left:567px;top:346.95px">H</div>
<div class="k12" style="left:591px;top:346.95px">L</div>
<div class="k12" style="left:615px;top:346.95px">H</div>
<div class="k12" style="left:639px;top:346.95px">L</div>
<div class="k12" style="left:663px;top:346.95px">V</div>
<div class="k12" style="left:687px;top:346.95px">1</div>
<div class="k12" style="left:711px;top:346.95px">0</div>
<div class="k12" style="left:735px;top:346.95px">1</div>
</div>
<div class="k0" style="left:17px;top:490px;width:20px;height:20px"></div>
<div class="k0" style="left:17px;top:490px;width:20px;height:1px"></div>
<div class="k0" style="left:17px;top:490px;width:1px;height:20px"></div>
<div class="k3" style="left:17px;top:509px;width:20px;height:1px"></div>
<div class="k3" style="left:36px;top:490px;width:1px;height:20px"></div>
<div class="k1" style="left:18px;top:491px;width:18px;height:1px"></div>
<div class="k1" style="left:18px;top:491px;width:1px;height:18px"></div>
<div class="k2" style="left:18px;top:508px;width:18px;height:1px"></div>
<div class="k2" style="left:35px;top:491px;width:1px;height:18px"></div>
<div class="k3" style="left:17px;top:509px;width:20px;height:1px"></div>
<div class="k3" style="left:36px;top:490px;width:1px;height:20px"></div>
<div class="k14" style="left:23px;top:499px;width:1px;height:1px"></div>
<div class="k14" style="left:24px;top:498px;width:1px;height:3px"></div>
<div class="k14" style="left:25px;top:497px;width:1px;height:5px"></div>
<div class="k14" style="left:26px;top:496px;width:1px;height:7px"></div>
<div class="k14" style="left:27px;top:495px;width:1px;height:9px"></div>
<div class="k0" style="left:37px;top:490px;width:523px;height:20px"></div>
<div class="k0" style="left:37px;top:490px;width:523px;height:1px"></div>
<div class="k0" style="left:37px;top:490px;width:1px;height:20px"></div>
<div class="k3" style="left:37px;top:509px;width:523px;height:1px"></div>
<div class="k3" style="left:559px;top:490px;width:1px;height:20px"></div>
<div class="k1" style="left:38px;top:491px;width:521px;height:1px"></div>
<div class="k1" style="left:38px;top:491px;width:1px;height:18px"></div>
<div class="k2" style="left:38px;top:508px;width:521px;height:1px"></div>
<div class="k2" style="left:558px;top:491px;width:1px;height:18px"></div>
<div class="k3" style="left:37px;top:509px;width:523px;height:1px"></div>
<div class="k3" style="left:559px;top:490px;width:1px;height:20px"></div>
<div class="k15" style="left:560px;top:490px;width:193px;height:20px"></div>
<div class="k0" style="left:753px;top:490px;width:20px;height:20px"></div>
<div class="k0" style="left:753px;top:490px;width:20px;height:1px"></div>
<div class="k0" style="left:753px;top:490px;width:1px;height:20px"></div>
<div class="k3" style="left:753px;top:509px;width:20px;height:1px"></div>
<div class="k3" style="left:772px;top:490px;width:1px;height:20px"></div>
<div class="k1" style="left:754px;top:491px;width:18px;height:1px"></div>
<div class="k1" style="left:754px;top:491px;width:1px;height:18px"></div>
<div class="k2" style="left:754px;top:508px;width:18px;height:1px"></div>
<div class="k2" style="left:771px;top:491px;width:1px;height:18px"></div>
<div class="k3" style="left:753px;top:509px;width:20px;height:1px"></div>
<div class="k3" style="left:772px;top:490px;width:1px;height:20px"></div>
<div class="k14" style="left:765px;top:499px;width:1px;height:1px"></div>
<div class="k14" style="left:764px;top:498px;width:1px;height:3px"></div>
<div class="k14" style="left:763px;top:497px;width:1px;height:5px"></div>
<div class="k14" style="left:762px;top:496px;width:1px;height:7px"></div>
<div class="k14" style="left:761px;top:495px;width:1px;height:9px"></div>
<div class="k16" style="left:0px;top:548px">IC Model:</div>
<div class="k16" style="left:0px;top:582px">Pins Counter:</div>
<div class="k16" style="left:0px;top:616px">VCC Voltage:</div>
<div class="k0" style="left:133px;top:542px;width:163px;height:24px"></div>
<div class="k2" style="left:133px;top:542px;width:163px;height:1px"></div>
<div class="k2" style="left:133px;top:542px;width:1px;height:24px"></div>
<div class="k3" style="left:134px;top:543px;width:161px;height:1px"></div>
<div class="k3" style="left:134px;top:543px;width:1px;height:22px"></div>
<div class="k0" style="left:134px;top:564px;width:161px;height:1px"></div>
<div class="k0" style="left:294px;top:543px;width:1px;height:22px"></div>
<div class="k1" style="left:133px;top:565px;width:163px;height:1px"></div>
<div class="k1" style="left:295px;top:542px;width:1px;height:24px"></div>
<div class="k17" style="left:138px;top:547px">8255</div>
<div class="k0" style="left:133px;top:574px;width:77px;height:24px"></div>
<div class="k2" style="left:133px;top:574px;width:77px;height:1px"></div>
<div class="k2" style="left:133px;top:574px;width:1px;height:24px"></div>
<div class="k3" style="left:134px;top:575px;width:75px;height:1px"></div>
<div class="k3" style="left:134px;top:575px;width:1px;height:22px"></div>
<div class="k0" style="left:134px;top:596px;width:75px;height:1px"></div>
<div class="k0" style="left:208px;top:575px;width:1px;height:22px"></div>
<div class="k1" style="left:133px;top:597px;width:77px;height:1px"></div>
<div class="k1" style="left:209px;top:574px;width:1px;height:24px"></div>
<div class="k17" style="left:137px;top:580px">40</div>
<div class="k0" style="left:189px;top:576px;width:19px;height:20px"></div>
<div class="k0" style="left:189px;top:576px;width:19px;height:1px"></div>
<div class="k0" style="left:189px;top:576px;width:1px;height:20px"></div>
<div class="k3" style="left:189px;top:595px;width:19px;height:1px"></div>
<div class="k3" style="left:207px;top:576px;width:1px;height:20px"></div>
<div class="k1" style="left:190px;top:577px;width:17px;height:1px"></div>
<div class="k1" style="left:190px;top:577px;width:1px;height:18px"></div>
<div class="k2" style="left:190px;top:594px;width:17px;height:1px"></div>
<div class="k2" style="left:206px;top:577px;width:1px;height:18px"></div>
<div class="k3" style="left:189px;top:595px;width:19px;height:1px"></div>
<div class="k3" style="left:207px;top:576px;width:1px;height:20px"></div>
<svg style="left:193px;top:584px" width="10" height="6"><path d="M0 0H8L4 4Z" fill="#808080"/><path d="M8.5 0.5L4.5 5" stroke="#fff" stroke-width="1"/></svg>
<div class="k1" style="left:133px;top:610px;width:77px;height:24px"></div>
<div class="k2" style="left:133px;top:610px;width:77px;height:1px"></div>
<div class="k2" style="left:133px;top:610px;width:1px;height:24px"></div>
<div class="k3" style="left:134px;top:611px;width:75px;height:1px"></div>
<div class="k3" style="left:134px;top:611px;width:1px;height:22px"></div>
<div class="k0" style="left:134px;top:632px;width:75px;height:1px"></div>
<div class="k0" style="left:208px;top:611px;width:1px;height:22px"></div>
<div class="k1" style="left:133px;top:633px;width:77px;height:1px"></div>
<div class="k1" style="left:209px;top:610px;width:1px;height:24px"></div>
<div class="k6" style="left:136px;top:616px">5.0V</div>
<div class="k0" style="left:189px;top:612px;width:19px;height:20px"></div>
<div class="k0" style="left:189px;top:612px;width:19px;height:1px"></div>
<div class="k0" style="left:189px;top:612px;width:1px;height:20px"></div>
<div class="k3" style="left:189px;top:631px;width:19px;height:1px"></div>
<div class="k3" style="left:207px;top:612px;width:1px;height:20px"></div>
<div class="k1" style="left:190px;top:613px;width:17px;height:1px"></div>
<div class="k1" style="left:190px;top:613px;width:1px;height:18px"></div>
<div class="k2" style="left:190px;top:630px;width:17px;height:1px"></div>
<div class="k2" style="left:206px;top:613px;width:1px;height:18px"></div>
<div class="k3" style="left:189px;top:631px;width:19px;height:1px"></div>
<div class="k3" style="left:207px;top:612px;width:1px;height:20px"></div>
<svg style="left:193px;top:620px" width="10" height="6"><path d="M0 0H9L4.5 5Z" fill="#000"/></svg>
<div class="k2" style="left:376px;top:530px;width:1px;height:199px"></div>
<div class="k1" style="left:377px;top:531px;width:1px;height:198px"></div>
<div class="k2" style="left:376px;top:530px;width:207px;height:1px"></div>
<div class="k1" style="left:377px;top:531px;width:205px;height:1px"></div>
<div class="k2" style="left:582px;top:530px;width:1px;height:199px"></div>
<div class="k1" style="left:583px;top:530px;width:1px;height:200px"></div>
<div class="k2" style="left:376px;top:728px;width:207px;height:1px"></div>
<div class="k1" style="left:376px;top:729px;width:208px;height:1px"></div>
<div class="k0" style="left:385px;top:524px;width:126px;height:10px"></div>
<div class="k18" style="left:387px;top:525.21px">Vector Symbol Define</div>
<div class="k6" style="left:392px;top:556px">0: Input Low</div>
<div class="k6" style="left:392px;top:572px">1: Input High</div>
<div class="k6" style="left:392px;top:588px">L: Out Low</div>
<div class="k6" style="left:392px;top:604px">H: Out High</div>
<div class="k6" style="left:392px;top:620px">C: Pulse Input</div>
<div class="k6" style="left:392px;top:636px">Z: High Impedance</div>
<div class="k6" style="left:392px;top:652px"> OC High or 3S</div>
<div class="k6" style="left:392px;top:668px">X: Ignore</div>
<div class="k6" style="left:392px;top:684px">G: GND</div>
<div class="k6" style="left:392px;top:700px">V: VCC</div>
<div class="k0" style="left:600px;top:604px;width:116px;height:30px"></div>
<div class="k1" style="left:600px;top:604px;width:116px;height:1px"></div>
<div class="k1" style="left:600px;top:604px;width:1px;height:30px"></div>
<div class="k3" style="left:600px;top:633px;width:116px;height:1px"></div>
<div class="k3" style="left:715px;top:604px;width:1px;height:30px"></div>
<div class="k0" style="left:601px;top:605px;width:114px;height:1px"></div>
<div class="k0" style="left:601px;top:605px;width:1px;height:28px"></div>
<div class="k2" style="left:601px;top:632px;width:114px;height:1px"></div>
<div class="k2" style="left:714px;top:605px;width:1px;height:28px"></div>
<div class="k3" style="left:600px;top:633px;width:116px;height:1px"></div>
<div class="k3" style="left:715px;top:604px;width:1px;height:30px"></div>
<div class="k19" style="left:601px;top:613px">Delete Line</div>
<div class="k20" style="left:600px;top:612px">Delete Line</div>
<div class="k0" style="left:600px;top:652px;width:114px;height:30px"></div>
<div class="k1" style="left:600px;top:652px;width:114px;height:1px"></div>
<div class="k1" style="left:600px;top:652px;width:1px;height:30px"></div>
<div class="k3" style="left:600px;top:681px;width:114px;height:1px"></div>
<div class="k3" style="left:713px;top:652px;width:1px;height:30px"></div>
<div class="k0" style="left:601px;top:653px;width:112px;height:1px"></div>
<div class="k0" style="left:601px;top:653px;width:1px;height:28px"></div>
<div class="k2" style="left:601px;top:680px;width:112px;height:1px"></div>
<div class="k2" style="left:712px;top:653px;width:1px;height:28px"></div>
<div class="k3" style="left:600px;top:681px;width:114px;height:1px"></div>
<div class="k3" style="left:713px;top:652px;width:1px;height:30px"></div>
<div class="k21" style="left:601px;top:661px">Modify Line</div>
<div class="k22" style="left:600px;top:660px">Modify Line</div>
<div class="k0" style="left:600px;top:700px;width:114px;height:30px"></div>
<div class="k1" style="left:600px;top:700px;width:114px;height:1px"></div>
<div class="k1" style="left:600px;top:700px;width:1px;height:30px"></div>
<div class="k3" style="left:600px;top:729px;width:114px;height:1px"></div>
<div class="k3" style="left:713px;top:700px;width:1px;height:30px"></div>
<div class="k0" style="left:601px;top:701px;width:112px;height:1px"></div>
<div class="k0" style="left:601px;top:701px;width:1px;height:28px"></div>
<div class="k2" style="left:601px;top:728px;width:112px;height:1px"></div>
<div class="k2" style="left:712px;top:701px;width:1px;height:28px"></div>
<div class="k3" style="left:600px;top:729px;width:114px;height:1px"></div>
<div class="k3" style="left:713px;top:700px;width:1px;height:30px"></div>
<div class="k23" style="left:600px;top:708px">New Line</div>
<div class="k14" style="left:80px;top:732px;width:119px;height:28px"></div>
<div class="k0" style="left:81px;top:733px;width:117px;height:26px"></div>
<div class="k1" style="left:81px;top:733px;width:117px;height:1px"></div>
<div class="k1" style="left:81px;top:733px;width:1px;height:26px"></div>
<div class="k3" style="left:81px;top:758px;width:117px;height:1px"></div>
<div class="k3" style="left:197px;top:733px;width:1px;height:26px"></div>
<div class="k0" style="left:82px;top:734px;width:115px;height:1px"></div>
<div class="k0" style="left:82px;top:734px;width:1px;height:24px"></div>
<div class="k2" style="left:82px;top:757px;width:115px;height:1px"></div>
<div class="k2" style="left:196px;top:734px;width:1px;height:24px"></div>
<div class="k3" style="left:81px;top:758px;width:117px;height:1px"></div>
<div class="k3" style="left:197px;top:733px;width:1px;height:26px"></div>
<div style="left:84px;top:736px;width:111px;height:20px;border:1px dotted #000;"></div>
<div class="k24" style="left:80px;top:739px">Save Edit</div>
<div class="k0" style="left:227px;top:732px;width:110px;height:28px"></div>
<div class="k1" style="left:227px;top:732px;width:110px;height:1px"></div>
<div class="k1" style="left:227px;top:732px;width:1px;height:28px"></div>
<div class="k3" style="left:227px;top:759px;width:110px;height:1px"></div>
<div class="k3" style="left:336px;top:732px;width:1px;height:28px"></div>
<div class="k0" style="left:228px;top:733px;width:108px;height:1px"></div>
<div class="k0" style="left:228px;top:733px;width:1px;height:26px"></div>
<div class="k2" style="left:228px;top:758px;width:108px;height:1px"></div>
<div class="k2" style="left:335px;top:733px;width:1px;height:26px"></div>
<div class="k3" style="left:227px;top:759px;width:110px;height:1px"></div>
<div class="k3" style="left:336px;top:732px;width:1px;height:28px"></div>
<div class="k25" style="left:227px;top:739px">Back</div>
<div class="k2" style="left:787px;top:66px;width:1px;height:693px"></div>
<div class="k1" style="left:788px;top:67px;width:1px;height:692px"></div>
<div class="k2" style="left:787px;top:66px;width:346px;height:1px"></div>
<div class="k1" style="left:788px;top:67px;width:344px;height:1px"></div>
<div class="k2" style="left:1132px;top:66px;width:1px;height:693px"></div>
<div class="k1" style="left:1133px;top:66px;width:1px;height:694px"></div>
<div class="k2" style="left:787px;top:758px;width:346px;height:1px"></div>
<div class="k1" style="left:787px;top:759px;width:347px;height:1px"></div>
<div class="k0" style="left:795px;top:60px;width:92px;height:10px"></div>
<div class="k6" style="left:797px;top:60px">Pins Vector Set</div>
<div class="k26" style="left:903px;top:178px;width:82px;height:451px"></div>
<div class="k1" style="left:905px;top:180px;width:78px;height:447px"></div>
<div class="k0" style="left:938px;top:178px;width:13px;height:2px"></div>
<div class="k27" style="left:938px;top:180px;width:2px;height:2px"></div>
<div class="k27" style="left:949px;top:180px;width:2px;height:2px"></div>
<div class="k0" style="left:940px;top:180px;width:9px;height:3px"></div>
<div class="k27" style="left:939px;top:182px;width:2px;height:1px"></div>
<div class="k27" style="left:948px;top:182px;width:2px;height:1px"></div>
<div class="k27" style="left:940px;top:183px;width:9px;height:2px"></div>
<div class="k28" style="left:888px;top:189px;width:16px;height:8px"></div>
<div class="k1" style="left:889px;top:190px;width:14px;height:6px"></div>
<div class="k28" style="left:985px;top:189px;width:14px;height:8px"></div>
<div class="k1" style="left:985px;top:190px;width:13px;height:6px"></div>
<div class="k29" style="left:911px;top:192.46px">1</div>
<div class="k30" style="left:940px;top:192.46px">40</div>
<div class="k1" style="left:832px;top:182px;width:50px;height:22px"></div>
<div class="k2" style="left:832px;top:182px;width:50px;height:1px"></div>
<div class="k2" style="left:832px;top:182px;width:1px;height:22px"></div>
<div class="k3" style="left:833px;top:183px;width:48px;height:1px"></div>
<div class="k3" style="left:833px;top:183px;width:1px;height:20px"></div>
<div class="k0" style="left:833px;top:202px;width:48px;height:1px"></div>
<div class="k0" style="left:880px;top:183px;width:1px;height:20px"></div>
<div class="k1" style="left:832px;top:203px;width:50px;height:1px"></div>
<div class="k1" style="left:881px;top:182px;width:1px;height:22px"></div>
<div class="k31" style="left:836px;top:187.53px">0</div>
<div class="k0" style="left:860px;top:184px;width:20px;height:18px"></div>
<div class="k0" style="left:860px;top:184px;width:20px;height:1px"></div>
<div class="k0" style="left:860px;top:184px;width:1px;height:18px"></div>
<div class="k3" style="left:860px;top:201px;width:20px;height:1px"></div>
<div class="k3" style="left:879px;top:184px;width:1px;height:18px"></div>
<div class="k1" style="left:861px;top:185px;width:18px;height:1px"></div>
<div class="k1" style="left:861px;top:185px;width:1px;height:16px"></div>
<div class="k2" style="left:861px;top:200px;width:18px;height:1px"></div>
<div class="k2" style="left:878px;top:185px;width:1px;height:16px"></div>
<div class="k3" style="left:860px;top:201px;width:20px;height:1px"></div>
<div class="k3" style="left:879px;top:184px;width:1px;height:18px"></div>
<svg style="left:866px;top:192px" width="8" height="5"><path d="M0 0H7L3.5 4Z" fill="#000"/></svg>
<div class="k1" style="left:1006px;top:182px;width:50px;height:22px"></div>
<div class="k2" style="left:1006px;top:182px;width:50px;height:1px"></div>
<div class="k2" style="left:1006px;top:182px;width:1px;height:22px"></div>
<div class="k3" style="left:1007px;top:183px;width:48px;height:1px"></div>
<div class="k3" style="left:1007px;top:183px;width:1px;height:20px"></div>
<div class="k0" style="left:1007px;top:202px;width:48px;height:1px"></div>
<div class="k0" style="left:1054px;top:183px;width:1px;height:20px"></div>
<div class="k1" style="left:1006px;top:203px;width:50px;height:1px"></div>
<div class="k1" style="left:1055px;top:182px;width:1px;height:22px"></div>
<div class="k31" style="left:1010px;top:187.53px">0</div>
<div class="k0" style="left:1034px;top:184px;width:20px;height:18px"></div>
<div class="k0" style="left:1034px;top:184px;width:20px;height:1px"></div>
<div class="k0" style="left:1034px;top:184px;width:1px;height:18px"></div>
<div class="k3" style="left:1034px;top:201px;width:20px;height:1px"></div>
<div class="k3" style="left:1053px;top:184px;width:1px;height:18px"></div>
<div class="k1" style="left:1035px;top:185px;width:18px;height:1px"></div>
<div class="k1" style="left:1035px;top:185px;width:1px;height:16px"></div>
<div class="k2" style="left:1035px;top:200px;width:18px;height:1px"></div>
<div class="k2" style="left:1052px;top:185px;width:1px;height:16px"></div>
<div class="k3" style="left:1034px;top:201px;width:20px;height:1px"></div>
<div class="k3" style="left:1053px;top:184px;width:1px;height:18px"></div>
<svg style="left:1040px;top:192px" width="8" height="5"><path d="M0 0H7L3.5 4Z" fill="#000"/></svg>
<div class="k28" style="left:888px;top:211px;width:16px;height:8px"></div>
<div class="k1" style="left:889px;top:212px;width:14px;height:6px"></div>
<div class="k28" style="left:985px;top:211px;width:14px;height:8px"></div>
<div class="k1" style="left:985px;top:212px;width:13px;height:6px"></div>
<div class="k29" style="left:911px;top:214.46px">2</div>
<div class="k30" style="left:940px;top:214.46px">39</div>
<div class="k1" style="left:832px;top:204px;width:50px;height:22px"></div>
<div class="k2" style="left:832px;top:204px;width:50px;height:1px"></div>
<div class="k2" style="left:832px;top:204px;width:1px;height:22px"></div>
<div class="k3" style="left:833px;top:205px;width:48px;height:1px"></div>
<div class="k3" style="left:833px;top:205px;width:1px;height:20px"></div>
<div class="k0" style="left:833px;top:224px;width:48px;height:1px"></div>
<div class="k0" style="left:880px;top:205px;width:1px;height:20px"></div>
<div class="k1" style="left:832px;top:225px;width:50px;height:1px"></div>
<div class="k1" style="left:881px;top:204px;width:1px;height:22px"></div>
<div class="k31" style="left:836px;top:209.53px">0</div>
<div class="k0" style="left:860px;top:206px;width:20px;height:18px"></div>
<div class="k0" style="left:860px;top:206px;width:20px;height:1px"></div>
<div class="k0" style="left:860px;top:206px;width:1px;height:18px"></div>
<div class="k3" style="left:860px;top:223px;width:20px;height:1px"></div>
<div class="k3" style="left:879px;top:206px;width:1px;height:18px"></div>
<div class="k1" style="left:861px;top:207px;width:18px;height:1px"></div>
<div class="k1" style="left:861px;top:207px;width:1px;height:16px"></div>
<div class="k2" style="left:861px;top:222px;width:18px;height:1px"></div>
<div class="k2" style="left:878px;top:207px;width:1px;height:16px"></div>
<div class="k3" style="left:860px;top:223px;width:20px;height:1px"></div>
<div class="k3" style="left:879px;top:206px;width:1px;height:18px"></div>
<svg style="left:866px;top:214px" width="8" height="5"><path d="M0 0H7L3.5 4Z" fill="#000"/></svg>
<div class="k1" style="left:1006px;top:204px;width:50px;height:22px"></div>
<div class="k2" style="left:1006px;top:204px;width:50px;height:1px"></div>
<div class="k2" style="left:1006px;top:204px;width:1px;height:22px"></div>
<div class="k3" style="left:1007px;top:205px;width:48px;height:1px"></div>
<div class="k3" style="left:1007px;top:205px;width:1px;height:20px"></div>
<div class="k0" style="left:1007px;top:224px;width:48px;height:1px"></div>
<div class="k0" style="left:1054px;top:205px;width:1px;height:20px"></div>
<div class="k1" style="left:1006px;top:225px;width:50px;height:1px"></div>
<div class="k1" style="left:1055px;top:204px;width:1px;height:22px"></div>
<div class="k31" style="left:1010px;top:209.53px">0</div>
<div class="k0" style="left:1034px;top:206px;width:20px;height:18px"></div>
<div class="k0" style="left:1034px;top:206px;width:20px;height:1px"></div>
<div class="k0" style="left:1034px;top:206px;width:1px;height:18px"></div>
<div class="k3" style="left:1034px;top:223px;width:20px;height:1px"></div>
<div class="k3" style="left:1053px;top:206px;width:1px;height:18px"></div>
<div class="k1" style="left:1035px;top:207px;width:18px;height:1px"></div>
<div class="k1" style="left:1035px;top:207px;width:1px;height:16px"></div>
<div class="k2" style="left:1035px;top:222px;width:18px;height:1px"></div>
<div class="k2" style="left:1052px;top:207px;width:1px;height:16px"></div>
<div class="k3" style="left:1034px;top:223px;width:20px;height:1px"></div>
<div class="k3" style="left:1053px;top:206px;width:1px;height:18px"></div>
<svg style="left:1040px;top:214px" width="8" height="5"><path d="M0 0H7L3.5 4Z" fill="#000"/></svg>
<div class="k28" style="left:888px;top:233px;width:16px;height:8px"></div>
<div class="k1" style="left:889px;top:234px;width:14px;height:6px"></div>
<div class="k28" style="left:985px;top:233px;width:14px;height:8px"></div>
<div class="k1" style="left:985px;top:234px;width:13px;height:6px"></div>
<div class="k29" style="left:911px;top:236.46px">3</div>
<div class="k30" style="left:940px;top:236.46px">38</div>
<div class="k1" style="left:832px;top:226px;width:50px;height:22px"></div>
<div class="k2" style="left:832px;top:226px;width:50px;height:1px"></div>
<div class="k2" style="left:832px;top:226px;width:1px;height:22px"></div>
<div class="k3" style="left:833px;top:227px;width:48px;height:1px"></div>
<div class="k3" style="left:833px;top:227px;width:1px;height:20px"></div>
<div class="k0" style="left:833px;top:246px;width:48px;height:1px"></div>
<div class="k0" style="left:880px;top:227px;width:1px;height:20px"></div>
<div class="k1" style="left:832px;top:247px;width:50px;height:1px"></div>
<div class="k1" style="left:881px;top:226px;width:1px;height:22px"></div>
<div class="k31" style="left:836px;top:231.53px">0</div>
<div class="k0" style="left:860px;top:228px;width:20px;height:18px"></div>
<div class="k0" style="left:860px;top:228px;width:20px;height:1px"></div>
<div class="k0" style="left:860px;top:228px;width:1px;height:18px"></div>
<div class="k3" style="left:860px;top:245px;width:20px;height:1px"></div>
<div class="k3" style="left:879px;top:228px;width:1px;height:18px"></div>
<div class="k1" style="left:861px;top:229px;width:18px;height:1px"></div>
<div class="k1" style="left:861px;top:229px;width:1px;height:16px"></div>
<div class="k2" style="left:861px;top:244px;width:18px;height:1px"></div>
<div class="k2" style="left:878px;top:229px;width:1px;height:16px"></div>
<div class="k3" style="left:860px;top:245px;width:20px;height:1px"></div>
<div class="k3" style="left:879px;top:228px;width:1px;height:18px"></div>
<svg style="left:866px;top:236px" width="8" height="5"><path d="M0 0H7L3.5 4Z" fill="#000"/></svg>
<div class="k1" style="left:1006px;top:226px;width:50px;height:22px"></div>
<div class="k2" style="left:1006px;top:226px;width:50px;height:1px"></div>
<div class="k2" style="left:1006px;top:226px;width:1px;height:22px"></div>
<div class="k3" style="left:1007px;top:227px;width:48px;height:1px"></div>
<div class="k3" style="left:1007px;top:227px;width:1px;height:20px"></div>
<div class="k0" style="left:1007px;top:246px;width:48px;height:1px"></div>
<div class="k0" style="left:1054px;top:227px;width:1px;height:20px"></div>
<div class="k1" style="left:1006px;top:247px;width:50px;height:1px"></div>
<div class="k1" style="left:1055px;top:226px;width:1px;height:22px"></div>
<div class="k31" style="left:1010px;top:231.53px">0</div>
<div class="k0" style="left:1034px;top:228px;width:20px;height:18px"></div>
<div class="k0" style="left:1034px;top:228px;width:20px;height:1px"></div>
<div class="k0" style="left:1034px;top:228px;width:1px;height:18px"></div>
<div class="k3" style="left:1034px;top:245px;width:20px;height:1px"></div>
<div class="k3" style="left:1053px;top:228px;width:1px;height:18px"></div>
<div class="k1" style="left:1035px;top:229px;width:18px;height:1px"></div>
<div class="k1" style="left:1035px;top:229px;width:1px;height:16px"></div>
<div class="k2" style="left:1035px;top:244px;width:18px;height:1px"></div>
<div class="k2" style="left:1052px;top:229px;width:1px;height:16px"></div>
<div class="k3" style="left:1034px;top:245px;width:20px;height:1px"></div>
<div class="k3" style="left:1053px;top:228px;width:1px;height:18px"></div>
<svg style="left:1040px;top:236px" width="8" height="5"><path d="M0 0H7L3.5 4Z" fill="#000"/></svg>
<div class="k28" style="left:888px;top:255px;width:16px;height:8px"></div>
<div class="k1" style="left:889px;top:256px;width:14px;height:6px"></div>
<div class="k28" style="left:985px;top:255px;width:14px;height:8px"></div>
<div class="k1" style="left:985px;top:256px;width:13px;height:6px"></div>
<div class="k29" style="left:911px;top:258.46px">4</div>
<div class="k30" style="left:940px;top:258.46px">37</div>
<div class="k1" style="left:832px;top:248px;width:50px;height:22px"></div>
<div class="k2" style="left:832px;top:248px;width:50px;height:1px"></div>
<div class="k2" style="left:832px;top:248px;width:1px;height:22px"></div>
<div class="k3" style="left:833px;top:249px;width:48px;height:1px"></div>
<div class="k3" style="left:833px;top:249px;width:1px;height:20px"></div>
<div class="k0" style="left:833px;top:268px;width:48px;height:1px"></div>
<div class="k0" style="left:880px;top:249px;width:1px;height:20px"></div>
<div class="k1" style="left:832px;top:269px;width:50px;height:1px"></div>
<div class="k1" style="left:881px;top:248px;width:1px;height:22px"></div>
<div class="k31" style="left:836px;top:253.53px">0</div>
<div class="k0" style="left:860px;top:250px;width:20px;height:18px"></div>
<div class="k0" style="left:860px;top:250px;width:20px;height:1px"></div>
<div class="k0" style="left:860px;top:250px;width:1px;height:18px"></div>
<div class="k3" style="left:860px;top:267px;width:20px;height:1px"></div>
<div class="k3" style="left:879px;top:250px;width:1px;height:18px"></div>
<div class="k1" style="left:861px;top:251px;width:18px;height:1px"></div>
<div class="k1" style="left:861px;top:251px;width:1px;height:16px"></div>
<div class="k2" style="left:861px;top:266px;width:18px;height:1px"></div>
<div class="k2" style="left:878px;top:251px;width:1px;height:16px"></div>
<div class="k3" style="left:860px;top:267px;width:20px;height:1px"></div>
<div class="k3" style="left:879px;top:250px;width:1px;height:18px"></div>
<svg style="left:866px;top:258px" width="8" height="5"><path d="M0 0H7L3.5 4Z" fill="#000"/></svg>
<div class="k1" style="left:1006px;top:248px;width:50px;height:22px"></div>
<div class="k2" style="left:1006px;top:248px;width:50px;height:1px"></div>
<div class="k2" style="left:1006px;top:248px;width:1px;height:22px"></div>
<div class="k3" style="left:1007px;top:249px;width:48px;height:1px"></div>
<div class="k3" style="left:1007px;top:249px;width:1px;height:20px"></div>
<div class="k0" style="left:1007px;top:268px;width:48px;height:1px"></div>
<div class="k0" style="left:1054px;top:249px;width:1px;height:20px"></div>
<div class="k1" style="left:1006px;top:269px;width:50px;height:1px"></div>
<div class="k1" style="left:1055px;top:248px;width:1px;height:22px"></div>
<div class="k31" style="left:1010px;top:253.53px">0</div>
<div class="k0" style="left:1034px;top:250px;width:20px;height:18px"></div>
<div class="k0" style="left:1034px;top:250px;width:20px;height:1px"></div>
<div class="k0" style="left:1034px;top:250px;width:1px;height:18px"></div>
<div class="k3" style="left:1034px;top:267px;width:20px;height:1px"></div>
<div class="k3" style="left:1053px;top:250px;width:1px;height:18px"></div>
<div class="k1" style="left:1035px;top:251px;width:18px;height:1px"></div>
<div class="k1" style="left:1035px;top:251px;width:1px;height:16px"></div>
<div class="k2" style="left:1035px;top:266px;width:18px;height:1px"></div>
<div class="k2" style="left:1052px;top:251px;width:1px;height:16px"></div>
<div class="k3" style="left:1034px;top:267px;width:20px;height:1px"></div>
<div class="k3" style="left:1053px;top:250px;width:1px;height:18px"></div>
<svg style="left:1040px;top:258px" width="8" height="5"><path d="M0 0H7L3.5 4Z" fill="#000"/></svg>
<div class="k28" style="left:888px;top:277px;width:16px;height:8px"></div>
<div class="k1" style="left:889px;top:278px;width:14px;height:6px"></div>
<div class="k28" style="left:985px;top:277px;width:14px;height:8px"></div>
<div class="k1" style="left:985px;top:278px;width:13px;height:6px"></div>
<div class="k29" style="left:911px;top:280.46px">5</div>
<div class="k30" style="left:940px;top:280.46px">36</div>
<div class="k1" style="left:832px;top:270px;width:50px;height:22px"></div>
<div class="k2" style="left:832px;top:270px;width:50px;height:1px"></div>
<div class="k2" style="left:832px;top:270px;width:1px;height:22px"></div>
<div class="k3" style="left:833px;top:271px;width:48px;height:1px"></div>
<div class="k3" style="left:833px;top:271px;width:1px;height:20px"></div>
<div class="k0" style="left:833px;top:290px;width:48px;height:1px"></div>
<div class="k0" style="left:880px;top:271px;width:1px;height:20px"></div>
<div class="k1" style="left:832px;top:291px;width:50px;height:1px"></div>
<div class="k1" style="left:881px;top:270px;width:1px;height:22px"></div>
<div class="k31" style="left:836px;top:275.53px">0</div>
<div class="k0" style="left:860px;top:272px;width:20px;height:18px"></div>
<div class="k0" style="left:860px;top:272px;width:20px;height:1px"></div>
<div class="k0" style="left:860px;top:272px;width:1px;height:18px"></div>
<div class="k3" style="left:860px;top:289px;width:20px;height:1px"></div>
<div class="k3" style="left:879px;top:272px;width:1px;height:18px"></div>
<div class="k1" style="left:861px;top:273px;width:18px;height:1px"></div>
<div class="k1" style="left:861px;top:273px;width:1px;height:16px"></div>
<div class="k2" style="left:861px;top:288px;width:18px;height:1px"></div>
<div class="k2" style="left:878px;top:273px;width:1px;height:16px"></div>
<div class="k3" style="left:860px;top:289px;width:20px;height:1px"></div>
<div class="k3" style="left:879px;top:272px;width:1px;height:18px"></div>
<svg style="left:866px;top:280px" width="8" height="5"><path d="M0 0H7L3.5 4Z" fill="#000"/></svg>
<div class="k1" style="left:1006px;top:270px;width:50px;height:22px"></div>
<div class="k2" style="left:1006px;top:270px;width:50px;height:1px"></div>
<div class="k2" style="left:1006px;top:270px;width:1px;height:22px"></div>
<div class="k3" style="left:1007px;top:271px;width:48px;height:1px"></div>
<div class="k3" style="left:1007px;top:271px;width:1px;height:20px"></div>
<div class="k0" style="left:1007px;top:290px;width:48px;height:1px"></div>
<div class="k0" style="left:1054px;top:271px;width:1px;height:20px"></div>
<div class="k1" style="left:1006px;top:291px;width:50px;height:1px"></div>
<div class="k1" style="left:1055px;top:270px;width:1px;height:22px"></div>
<div class="k31" style="left:1010px;top:275.53px">0</div>
<div class="k0" style="left:1034px;top:272px;width:20px;height:18px"></div>
<div class="k0" style="left:1034px;top:272px;width:20px;height:1px"></div>
<div class="k0" style="left:1034px;top:272px;width:1px;height:18px"></div>
<div class="k3" style="left:1034px;top:289px;width:20px;height:1px"></div>
<div class="k3" style="left:1053px;top:272px;width:1px;height:18px"></div>
<div class="k1" style="left:1035px;top:273px;width:18px;height:1px"></div>
<div class="k1" style="left:1035px;top:273px;width:1px;height:16px"></div>
<div class="k2" style="left:1035px;top:288px;width:18px;height:1px"></div>
<div class="k2" style="left:1052px;top:273px;width:1px;height:16px"></div>
<div class="k3" style="left:1034px;top:289px;width:20px;height:1px"></div>
<div class="k3" style="left:1053px;top:272px;width:1px;height:18px"></div>
<svg style="left:1040px;top:280px" width="8" height="5"><path d="M0 0H7L3.5 4Z" fill="#000"/></svg>
<div class="k28" style="left:888px;top:299px;width:16px;height:8px"></div>
<div class="k1" style="left:889px;top:300px;width:14px;height:6px"></div>
<div class="k28" style="left:985px;top:299px;width:14px;height:8px"></div>
<div class="k1" style="left:985px;top:300px;width:13px;height:6px"></div>
<div class="k29" style="left:911px;top:302.46px">6</div>
<div class="k30" style="left:940px;top:302.46px">35</div>
<div class="k1" style="left:832px;top:292px;width:50px;height:22px"></div>
<div class="k2" style="left:832px;top:292px;width:50px;height:1px"></div>
<div class="k2" style="left:832px;top:292px;width:1px;height:22px"></div>
<div class="k3" style="left:833px;top:293px;width:48px;height:1px"></div>
<div class="k3" style="left:833px;top:293px;width:1px;height:20px"></div>
<div class="k0" style="left:833px;top:312px;width:48px;height:1px"></div>
<div class="k0" style="left:880px;top:293px;width:1px;height:20px"></div>
<div class="k1" style="left:832px;top:313px;width:50px;height:1px"></div>
<div class="k1" style="left:881px;top:292px;width:1px;height:22px"></div>
<div class="k31" style="left:836px;top:297.53px">1</div>
<div class="k0" style="left:860px;top:294px;width:20px;height:18px"></div>
<div class="k0" style="left:860px;top:294px;width:20px;height:1px"></div>
<div class="k0" style="left:860px;top:294px;width:1px;height:18px"></div>
<div class="k3" style="left:860px;top:311px;width:20px;height:1px"></div>
<div class="k3" style="left:879px;top:294px;width:1px;height:18px"></div>
<div class="k1" style="left:861px;top:295px;width:18px;height:1px"></div>
<div class="k1" style="left:861px;top:295px;width:1px;height:16px"></div>
<div class="k2" style="left:861px;top:310px;width:18px;height:1px"></div>
<div class="k2" style="left:878px;top:295px;width:1px;height:16px"></div>
<div class="k3" style="left:860px;top:311px;width:20px;height:1px"></div>
<div class="k3" style="left:879px;top:294px;width:1px;height:18px"></div>
<svg style="left:866px;top:302px" width="8" height="5"><path d="M0 0H7L3.5 4Z" fill="#000"/></svg>
<div class="k1" style="left:1006px;top:292px;width:50px;height:22px"></div>
<div class="k2" style="left:1006px;top:292px;width:50px;height:1px"></div>
<div class="k2" style="left:1006px;top:292px;width:1px;height:22px"></div>
<div class="k3" style="left:1007px;top:293px;width:48px;height:1px"></div>
<div class="k3" style="left:1007px;top:293px;width:1px;height:20px"></div>
<div class="k0" style="left:1007px;top:312px;width:48px;height:1px"></div>
<div class="k0" style="left:1054px;top:293px;width:1px;height:20px"></div>
<div class="k1" style="left:1006px;top:313px;width:50px;height:1px"></div>
<div class="k1" style="left:1055px;top:292px;width:1px;height:22px"></div>
<div class="k31" style="left:1010px;top:297.53px">1</div>
<div class="k0" style="left:1034px;top:294px;width:20px;height:18px"></div>
<div class="k0" style="left:1034px;top:294px;width:20px;height:1px"></div>
<div class="k0" style="left:1034px;top:294px;width:1px;height:18px"></div>
<div class="k3" style="left:1034px;top:311px;width:20px;height:1px"></div>
<div class="k3" style="left:1053px;top:294px;width:1px;height:18px"></div>
<div class="k1" style="left:1035px;top:295px;width:18px;height:1px"></div>
<div class="k1" style="left:1035px;top:295px;width:1px;height:16px"></div>
<div class="k2" style="left:1035px;top:310px;width:18px;height:1px"></div>
<div class="k2" style="left:1052px;top:295px;width:1px;height:16px"></div>
<div class="k3" style="left:1034px;top:311px;width:20px;height:1px"></div>
<div class="k3" style="left:1053px;top:294px;width:1px;height:18px"></div>
<svg style="left:1040px;top:302px" width="8" height="5"><path d="M0 0H7L3.5 4Z" fill="#000"/></svg>
<div class="k28" style="left:888px;top:321px;width:16px;height:8px"></div>
<div class="k1" style="left:889px;top:322px;width:14px;height:6px"></div>
<div class="k28" style="left:985px;top:321px;width:14px;height:8px"></div>
<div class="k1" style="left:985px;top:322px;width:13px;height:6px"></div>
<div class="k29" style="left:911px;top:324.46px">7</div>
<div class="k30" style="left:940px;top:324.46px">34</div>
<div class="k1" style="left:832px;top:314px;width:50px;height:22px"></div>
<div class="k2" style="left:832px;top:314px;width:50px;height:1px"></div>
<div class="k2" style="left:832px;top:314px;width:1px;height:22px"></div>
<div class="k3" style="left:833px;top:315px;width:48px;height:1px"></div>
<div class="k3" style="left:833px;top:315px;width:1px;height:20px"></div>
<div class="k0" style="left:833px;top:334px;width:48px;height:1px"></div>
<div class="k0" style="left:880px;top:315px;width:1px;height:20px"></div>
<div class="k1" style="left:832px;top:335px;width:50px;height:1px"></div>
<div class="k1" style="left:881px;top:314px;width:1px;height:22px"></div>
<div class="k31" style="left:836px;top:319.53px">G</div>
<div class="k0" style="left:860px;top:316px;width:20px;height:18px"></div>
<div class="k0" style="left:860px;top:316px;width:20px;height:1px"></div>
<div class="k0" style="left:860px;top:316px;width:1px;height:18px"></div>
<div class="k3" style="left:860px;top:333px;width:20px;height:1px"></div>
<div class="k3" style="left:879px;top:316px;width:1px;height:18px"></div>
<div class="k1" style="left:861px;top:317px;width:18px;height:1px"></div>
<div class="k1" style="left:861px;top:317px;width:1px;height:16px"></div>
<div class="k2" style="left:861px;top:332px;width:18px;height:1px"></div>
<div class="k2" style="left:878px;top:317px;width:1px;height:16px"></div>
<div class="k3" style="left:860px;top:333px;width:20px;height:1px"></div>
<div class="k3" style="left:879px;top:316px;width:1px;height:18px"></div>
<svg style="left:866px;top:324px" width="8" height="5"><path d="M0 0H7L3.5 4Z" fill="#000"/></svg>
<div class="k1" style="left:1006px;top:314px;width:50px;height:22px"></div>
<div class="k2" style="left:1006px;top:314px;width:50px;height:1px"></div>
<div class="k2" style="left:1006px;top:314px;width:1px;height:22px"></div>
<div class="k3" style="left:1007px;top:315px;width:48px;height:1px"></div>
<div class="k3" style="left:1007px;top:315px;width:1px;height:20px"></div>
<div class="k0" style="left:1007px;top:334px;width:48px;height:1px"></div>
<div class="k0" style="left:1054px;top:315px;width:1px;height:20px"></div>
<div class="k1" style="left:1006px;top:335px;width:50px;height:1px"></div>
<div class="k1" style="left:1055px;top:314px;width:1px;height:22px"></div>
<div class="k31" style="left:1010px;top:319.53px">Z</div>
<div class="k0" style="left:1034px;top:316px;width:20px;height:18px"></div>
<div class="k0" style="left:1034px;top:316px;width:20px;height:1px"></div>
<div class="k0" style="left:1034px;top:316px;width:1px;height:18px"></div>
<div class="k3" style="left:1034px;top:333px;width:20px;height:1px"></div>
<div class="k3" style="left:1053px;top:316px;width:1px;height:18px"></div>
<div class="k1" style="left:1035px;top:317px;width:18px;height:1px"></div>
<div class="k1" style="left:1035px;top:317px;width:1px;height:16px"></div>
<div class="k2" style="left:1035px;top:332px;width:18px;height:1px"></div>
<div class="k2" style="left:1052px;top:317px;width:1px;height:16px"></div>
<div class="k3" style="left:1034px;top:333px;width:20px;height:1px"></div>
<div class="k3" style="left:1053px;top:316px;width:1px;height:18px"></div>
<svg style="left:1040px;top:324px" width="8" height="5"><path d="M0 0H7L3.5 4Z" fill="#000"/></svg>
<div class="k28" style="left:888px;top:343px;width:16px;height:8px"></div>
<div class="k1" style="left:889px;top:344px;width:14px;height:6px"></div>
<div class="k28" style="left:985px;top:343px;width:14px;height:8px"></div>
<div class="k1" style="left:985px;top:344px;width:13px;height:6px"></div>
<div class="k29" style="left:911px;top:346.46px">8</div>
<div class="k30" style="left:940px;top:346.46px">33</div>
<div class="k1" style="left:832px;top:336px;width:50px;height:22px"></div>
<div class="k2" style="left:832px;top:336px;width:50px;height:1px"></div>
<div class="k2" style="left:832px;top:336px;width:1px;height:22px"></div>
<div class="k3" style="left:833px;top:337px;width:48px;height:1px"></div>
<div class="k3" style="left:833px;top:337px;width:1px;height:20px"></div>
<div class="k0" style="left:833px;top:356px;width:48px;height:1px"></div>
<div class="k0" style="left:880px;top:337px;width:1px;height:20px"></div>
<div class="k1" style="left:832px;top:357px;width:50px;height:1px"></div>
<div class="k1" style="left:881px;top:336px;width:1px;height:22px"></div>
<div class="k31" style="left:836px;top:341.53px">0</div>
<div class="k0" style="left:860px;top:338px;width:20px;height:18px"></div>
<div class="k0" style="left:860px;top:338px;width:20px;height:1px"></div>
<div class="k0" style="left:860px;top:338px;width:1px;height:18px"></div>
<div class="k3" style="left:860px;top:355px;width:20px;height:1px"></div>
<div class="k3" style="left:879px;top:338px;width:1px;height:18px"></div>
<div class="k1" style="left:861px;top:339px;width:18px;height:1px"></div>
<div class="k1" style="left:861px;top:339px;width:1px;height:16px"></div>
<div class="k2" style="left:861px;top:354px;width:18px;height:1px"></div>
<div class="k2" style="left:878px;top:339px;width:1px;height:16px"></div>
<div class="k3" style="left:860px;top:355px;width:20px;height:1px"></div>
<div class="k3" style="left:879px;top:338px;width:1px;height:18px"></div>
<svg style="left:866px;top:346px" width="8" height="5"><path d="M0 0H7L3.5 4Z" fill="#000"/></svg>
<div class="k1" style="left:1006px;top:336px;width:50px;height:22px"></div>
<div class="k2" style="left:1006px;top:336px;width:50px;height:1px"></div>
<div class="k2" style="left:1006px;top:336px;width:1px;height:22px"></div>
<div class="k3" style="left:1007px;top:337px;width:48px;height:1px"></div>
<div class="k3" style="left:1007px;top:337px;width:1px;height:20px"></div>
<div class="k0" style="left:1007px;top:356px;width:48px;height:1px"></div>
<div class="k0" style="left:1054px;top:337px;width:1px;height:20px"></div>
<div class="k1" style="left:1006px;top:357px;width:50px;height:1px"></div>
<div class="k1" style="left:1055px;top:336px;width:1px;height:22px"></div>
<div class="k31" style="left:1010px;top:341.53px">Z</div>
<div class="k0" style="left:1034px;top:338px;width:20px;height:18px"></div>
<div class="k0" style="left:1034px;top:338px;width:20px;height:1px"></div>
<div class="k0" style="left:1034px;top:338px;width:1px;height:18px"></div>
<div class="k3" style="left:1034px;top:355px;width:20px;height:1px"></div>
<div class="k3" style="left:1053px;top:338px;width:1px;height:18px"></div>
<div class="k1" style="left:1035px;top:339px;width:18px;height:1px"></div>
<div class="k1" style="left:1035px;top:339px;width:1px;height:16px"></div>
<div class="k2" style="left:1035px;top:354px;width:18px;height:1px"></div>
<div class="k2" style="left:1052px;top:339px;width:1px;height:16px"></div>
<div class="k3" style="left:1034px;top:355px;width:20px;height:1px"></div>
<div class="k3" style="left:1053px;top:338px;width:1px;height:18px"></div>
<svg style="left:1040px;top:346px" width="8" height="5"><path d="M0 0H7L3.5 4Z" fill="#000"/></svg>
<div class="k28" style="left:888px;top:365px;width:16px;height:8px"></div>
<div class="k1" style="left:889px;top:366px;width:14px;height:6px"></div>
<div class="k28" style="left:985px;top:365px;width:14px;height:8px"></div>
<div class="k1" style="left:985px;top:366px;width:13px;height:6px"></div>
<div class="k29" style="left:911px;top:368.46px">9</div>
<div class="k30" style="left:940px;top:368.46px">32</div>
<div class="k1" style="left:832px;top:358px;width:50px;height:22px"></div>
<div class="k2" style="left:832px;top:358px;width:50px;height:1px"></div>
<div class="k2" style="left:832px;top:358px;width:1px;height:22px"></div>
<div class="k3" style="left:833px;top:359px;width:48px;height:1px"></div>
<div class="k3" style="left:833px;top:359px;width:1px;height:20px"></div>
<div class="k0" style="left:833px;top:378px;width:48px;height:1px"></div>
<div class="k0" style="left:880px;top:359px;width:1px;height:20px"></div>
<div class="k1" style="left:832px;top:379px;width:50px;height:1px"></div>
<div class="k1" style="left:881px;top:358px;width:1px;height:22px"></div>
<div class="k31" style="left:836px;top:363.53px">0</div>
<div class="k0" style="left:860px;top:360px;width:20px;height:18px"></div>
<div class="k0" style="left:860px;top:360px;width:20px;height:1px"></div>
<div class="k0" style="left:860px;top:360px;width:1px;height:18px"></div>
<div class="k3" style="left:860px;top:377px;width:20px;height:1px"></div>
<div class="k3" style="left:879px;top:360px;width:1px;height:18px"></div>
<div class="k1" style="left:861px;top:361px;width:18px;height:1px"></div>
<div class="k1" style="left:861px;top:361px;width:1px;height:16px"></div>
<div class="k2" style="left:861px;top:376px;width:18px;height:1px"></div>
<div class="k2" style="left:878px;top:361px;width:1px;height:16px"></div>
<div class="k3" style="left:860px;top:377px;width:20px;height:1px"></div>
<div class="k3" style="left:879px;top:360px;width:1px;height:18px"></div>
<svg style="left:866px;top:368px" width="8" height="5"><path d="M0 0H7L3.5 4Z" fill="#000"/></svg>
<div class="k1" style="left:1006px;top:358px;width:50px;height:22px"></div>
<div class="k2" style="left:1006px;top:358px;width:50px;height:1px"></div>
<div class="k2" style="left:1006px;top:358px;width:1px;height:22px"></div>
<div class="k3" style="left:1007px;top:359px;width:48px;height:1px"></div>
<div class="k3" style="left:1007px;top:359px;width:1px;height:20px"></div>
<div class="k0" style="left:1007px;top:378px;width:48px;height:1px"></div>
<div class="k0" style="left:1054px;top:359px;width:1px;height:20px"></div>
<div class="k1" style="left:1006px;top:379px;width:50px;height:1px"></div>
<div class="k1" style="left:1055px;top:358px;width:1px;height:22px"></div>
<div class="k31" style="left:1010px;top:363.53px">Z</div>
<div class="k0" style="left:1034px;top:360px;width:20px;height:18px"></div>
<div class="k0" style="left:1034px;top:360px;width:20px;height:1px"></div>
<div class="k0" style="left:1034px;top:360px;width:1px;height:18px"></div>
<div class="k3" style="left:1034px;top:377px;width:20px;height:1px"></div>
<div class="k3" style="left:1053px;top:360px;width:1px;height:18px"></div>
<div class="k1" style="left:1035px;top:361px;width:18px;height:1px"></div>
<div class="k1" style="left:1035px;top:361px;width:1px;height:16px"></div>
<div class="k2" style="left:1035px;top:376px;width:18px;height:1px"></div>
<div class="k2" style="left:1052px;top:361px;width:1px;height:16px"></div>
<div class="k3" style="left:1034px;top:377px;width:20px;height:1px"></div>
<div class="k3" style="left:1053px;top:360px;width:1px;height:18px"></div>
<svg style="left:1040px;top:368px" width="8" height="5"><path d="M0 0H7L3.5 4Z" fill="#000"/></svg>
<div class="k28" style="left:888px;top:387px;width:16px;height:8px"></div>
<div class="k1" style="left:889px;top:388px;width:14px;height:6px"></div>
<div class="k28" style="left:985px;top:387px;width:14px;height:8px"></div>
<div class="k1" style="left:985px;top:388px;width:13px;height:6px"></div>
<div class="k29" style="left:911px;top:390.46px">10</div>
<div class="k30" style="left:940px;top:390.46px">31</div>
<div class="k1" style="left:832px;top:380px;width:50px;height:22px"></div>
<div class="k2" style="left:832px;top:380px;width:50px;height:1px"></div>
<div class="k2" style="left:832px;top:380px;width:1px;height:22px"></div>
<div class="k3" style="left:833px;top:381px;width:48px;height:1px"></div>
<div class="k3" style="left:833px;top:381px;width:1px;height:20px"></div>
<div class="k0" style="left:833px;top:400px;width:48px;height:1px"></div>
<div class="k0" style="left:880px;top:381px;width:1px;height:20px"></div>
<div class="k1" style="left:832px;top:401px;width:50px;height:1px"></div>
<div class="k1" style="left:881px;top:380px;width:1px;height:22px"></div>
<div class="k31" style="left:836px;top:385.53px">0</div>
<div class="k0" style="left:860px;top:382px;width:20px;height:18px"></div>
<div class="k0" style="left:860px;top:382px;width:20px;height:1px"></div>
<div class="k0" style="left:860px;top:382px;width:1px;height:18px"></div>
<div class="k3" style="left:860px;top:399px;width:20px;height:1px"></div>
<div class="k3" style="left:879px;top:382px;width:1px;height:18px"></div>
<div class="k1" style="left:861px;top:383px;width:18px;height:1px"></div>
<div class="k1" style="left:861px;top:383px;width:1px;height:16px"></div>
<div class="k2" style="left:861px;top:398px;width:18px;height:1px"></div>
<div class="k2" style="left:878px;top:383px;width:1px;height:16px"></div>
<div class="k3" style="left:860px;top:399px;width:20px;height:1px"></div>
<div class="k3" style="left:879px;top:382px;width:1px;height:18px"></div>
<svg style="left:866px;top:390px" width="8" height="5"><path d="M0 0H7L3.5 4Z" fill="#000"/></svg>
<div class="k1" style="left:1006px;top:380px;width:50px;height:22px"></div>
<div class="k2" style="left:1006px;top:380px;width:50px;height:1px"></div>
<div class="k2" style="left:1006px;top:380px;width:1px;height:22px"></div>
<div class="k3" style="left:1007px;top:381px;width:48px;height:1px"></div>
<div class="k3" style="left:1007px;top:381px;width:1px;height:20px"></div>
<div class="k0" style="left:1007px;top:400px;width:48px;height:1px"></div>
<div class="k0" style="left:1054px;top:381px;width:1px;height:20px"></div>
<div class="k1" style="left:1006px;top:401px;width:50px;height:1px"></div>
<div class="k1" style="left:1055px;top:380px;width:1px;height:22px"></div>
<div class="k31" style="left:1010px;top:385.53px">Z</div>
<div class="k0" style="left:1034px;top:382px;width:20px;height:18px"></div>
<div class="k0" style="left:1034px;top:382px;width:20px;height:1px"></div>
<div class="k0" style="left:1034px;top:382px;width:1px;height:18px"></div>
<div class="k3" style="left:1034px;top:399px;width:20px;height:1px"></div>
<div class="k3" style="left:1053px;top:382px;width:1px;height:18px"></div>
<div class="k1" style="left:1035px;top:383px;width:18px;height:1px"></div>
<div class="k1" style="left:1035px;top:383px;width:1px;height:16px"></div>
<div class="k2" style="left:1035px;top:398px;width:18px;height:1px"></div>
<div class="k2" style="left:1052px;top:383px;width:1px;height:16px"></div>
<div class="k3" style="left:1034px;top:399px;width:20px;height:1px"></div>
<div class="k3" style="left:1053px;top:382px;width:1px;height:18px"></div>
<svg style="left:1040px;top:390px" width="8" height="5"><path d="M0 0H7L3.5 4Z" fill="#000"/></svg>
<div class="k28" style="left:888px;top:409px;width:16px;height:8px"></div>
<div class="k1" style="left:889px;top:410px;width:14px;height:6px"></div>
<div class="k28" style="left:985px;top:409px;width:14px;height:8px"></div>
<div class="k1" style="left:985px;top:410px;width:13px;height:6px"></div>
<div class="k29" style="left:911px;top:412.46px">11</div>
<div class="k30" style="left:940px;top:412.46px">30</div>
<div class="k1" style="left:832px;top:402px;width:50px;height:22px"></div>
<div class="k2" style="left:832px;top:402px;width:50px;height:1px"></div>
<div class="k2" style="left:832px;top:402px;width:1px;height:22px"></div>
<div class="k3" style="left:833px;top:403px;width:48px;height:1px"></div>
<div class="k3" style="left:833px;top:403px;width:1px;height:20px"></div>
<div class="k0" style="left:833px;top:422px;width:48px;height:1px"></div>
<div class="k0" style="left:880px;top:403px;width:1px;height:20px"></div>
<div class="k1" style="left:832px;top:423px;width:50px;height:1px"></div>
<div class="k1" style="left:881px;top:402px;width:1px;height:22px"></div>
<div class="k31" style="left:836px;top:407.53px">0</div>
<div class="k0" style="left:860px;top:404px;width:20px;height:18px"></div>
<div class="k0" style="left:860px;top:404px;width:20px;height:1px"></div>
<div class="k0" style="left:860px;top:404px;width:1px;height:18px"></div>
<div class="k3" style="left:860px;top:421px;width:20px;height:1px"></div>
<div class="k3" style="left:879px;top:404px;width:1px;height:18px"></div>
<div class="k1" style="left:861px;top:405px;width:18px;height:1px"></div>
<div class="k1" style="left:861px;top:405px;width:1px;height:16px"></div>
<div class="k2" style="left:861px;top:420px;width:18px;height:1px"></div>
<div class="k2" style="left:878px;top:405px;width:1px;height:16px"></div>
<div class="k3" style="left:860px;top:421px;width:20px;height:1px"></div>
<div class="k3" style="left:879px;top:404px;width:1px;height:18px"></div>
<svg style="left:866px;top:412px" width="8" height="5"><path d="M0 0H7L3.5 4Z" fill="#000"/></svg>
<div class="k1" style="left:1006px;top:402px;width:50px;height:22px"></div>
<div class="k2" style="left:1006px;top:402px;width:50px;height:1px"></div>
<div class="k2" style="left:1006px;top:402px;width:1px;height:22px"></div>
<div class="k3" style="left:1007px;top:403px;width:48px;height:1px"></div>
<div class="k3" style="left:1007px;top:403px;width:1px;height:20px"></div>
<div class="k0" style="left:1007px;top:422px;width:48px;height:1px"></div>
<div class="k0" style="left:1054px;top:403px;width:1px;height:20px"></div>
<div class="k1" style="left:1006px;top:423px;width:50px;height:1px"></div>
<div class="k1" style="left:1055px;top:402px;width:1px;height:22px"></div>
<div class="k31" style="left:1010px;top:407.53px">Z</div>
<div class="k0" style="left:1034px;top:404px;width:20px;height:18px"></div>
<div class="k0" style="left:1034px;top:404px;width:20px;height:1px"></div>
<div class="k0" style="left:1034px;top:404px;width:1px;height:18px"></div>
<div class="k3" style="left:1034px;top:421px;width:20px;height:1px"></div>
<div class="k3" style="left:1053px;top:404px;width:1px;height:18px"></div>
<div class="k1" style="left:1035px;top:405px;width:18px;height:1px"></div>
<div class="k1" style="left:1035px;top:405px;width:1px;height:16px"></div>
<div class="k2" style="left:1035px;top:420px;width:18px;height:1px"></div>
<div class="k2" style="left:1052px;top:405px;width:1px;height:16px"></div>
<div class="k3" style="left:1034px;top:421px;width:20px;height:1px"></div>
<div class="k3" style="left:1053px;top:404px;width:1px;height:18px"></div>
<svg style="left:1040px;top:412px" width="8" height="5"><path d="M0 0H7L3.5 4Z" fill="#000"/></svg>
<div class="k28" style="left:888px;top:431px;width:16px;height:8px"></div>
<div class="k1" style="left:889px;top:432px;width:14px;height:6px"></div>
<div class="k28" style="left:985px;top:431px;width:14px;height:8px"></div>
<div class="k1" style="left:985px;top:432px;width:13px;height:6px"></div>
<div class="k29" style="left:911px;top:434.46px">12</div>
<div class="k30" style="left:940px;top:434.46px">29</div>
<div class="k1" style="left:832px;top:424px;width:50px;height:22px"></div>
<div class="k2" style="left:832px;top:424px;width:50px;height:1px"></div>
<div class="k2" style="left:832px;top:424px;width:1px;height:22px"></div>
<div class="k3" style="left:833px;top:425px;width:48px;height:1px"></div>
<div class="k3" style="left:833px;top:425px;width:1px;height:20px"></div>
<div class="k0" style="left:833px;top:444px;width:48px;height:1px"></div>
<div class="k0" style="left:880px;top:425px;width:1px;height:20px"></div>
<div class="k1" style="left:832px;top:445px;width:50px;height:1px"></div>
<div class="k1" style="left:881px;top:424px;width:1px;height:22px"></div>
<div class="k31" style="left:836px;top:429.53px">0</div>
<div class="k0" style="left:860px;top:426px;width:20px;height:18px"></div>
<div class="k0" style="left:860px;top:426px;width:20px;height:1px"></div>
<div class="k0" style="left:860px;top:426px;width:1px;height:18px"></div>
<div class="k3" style="left:860px;top:443px;width:20px;height:1px"></div>
<div class="k3" style="left:879px;top:426px;width:1px;height:18px"></div>
<div class="k1" style="left:861px;top:427px;width:18px;height:1px"></div>
<div class="k1" style="left:861px;top:427px;width:1px;height:16px"></div>
<div class="k2" style="left:861px;top:442px;width:18px;height:1px"></div>
<div class="k2" style="left:878px;top:427px;width:1px;height:16px"></div>
<div class="k3" style="left:860px;top:443px;width:20px;height:1px"></div>
<div class="k3" style="left:879px;top:426px;width:1px;height:18px"></div>
<svg style="left:866px;top:434px" width="8" height="5"><path d="M0 0H7L3.5 4Z" fill="#000"/></svg>
<div class="k1" style="left:1006px;top:424px;width:50px;height:22px"></div>
<div class="k2" style="left:1006px;top:424px;width:50px;height:1px"></div>
<div class="k2" style="left:1006px;top:424px;width:1px;height:22px"></div>
<div class="k3" style="left:1007px;top:425px;width:48px;height:1px"></div>
<div class="k3" style="left:1007px;top:425px;width:1px;height:20px"></div>
<div class="k0" style="left:1007px;top:444px;width:48px;height:1px"></div>
<div class="k0" style="left:1054px;top:425px;width:1px;height:20px"></div>
<div class="k1" style="left:1006px;top:445px;width:50px;height:1px"></div>
<div class="k1" style="left:1055px;top:424px;width:1px;height:22px"></div>
<div class="k31" style="left:1010px;top:429.53px">Z</div>
<div class="k0" style="left:1034px;top:426px;width:20px;height:18px"></div>
<div class="k0" style="left:1034px;top:426px;width:20px;height:1px"></div>
<div class="k0" style="left:1034px;top:426px;width:1px;height:18px"></div>
<div class="k3" style="left:1034px;top:443px;width:20px;height:1px"></div>
<div class="k3" style="left:1053px;top:426px;width:1px;height:18px"></div>
<div class="k1" style="left:1035px;top:427px;width:18px;height:1px"></div>
<div class="k1" style="left:1035px;top:427px;width:1px;height:16px"></div>
<div class="k2" style="left:1035px;top:442px;width:18px;height:1px"></div>
<div class="k2" style="left:1052px;top:427px;width:1px;height:16px"></div>
<div class="k3" style="left:1034px;top:443px;width:20px;height:1px"></div>
<div class="k3" style="left:1053px;top:426px;width:1px;height:18px"></div>
<svg style="left:1040px;top:434px" width="8" height="5"><path d="M0 0H7L3.5 4Z" fill="#000"/></svg>
<div class="k28" style="left:888px;top:453px;width:16px;height:8px"></div>
<div class="k1" style="left:889px;top:454px;width:14px;height:6px"></div>
<div class="k28" style="left:985px;top:453px;width:14px;height:8px"></div>
<div class="k1" style="left:985px;top:454px;width:13px;height:6px"></div>
<div class="k29" style="left:911px;top:456.46px">13</div>
<div class="k30" style="left:940px;top:456.46px">28</div>
<div class="k1" style="left:832px;top:446px;width:50px;height:22px"></div>
<div class="k2" style="left:832px;top:446px;width:50px;height:1px"></div>
<div class="k2" style="left:832px;top:446px;width:1px;height:22px"></div>
<div class="k3" style="left:833px;top:447px;width:48px;height:1px"></div>
<div class="k3" style="left:833px;top:447px;width:1px;height:20px"></div>
<div class="k0" style="left:833px;top:466px;width:48px;height:1px"></div>
<div class="k0" style="left:880px;top:447px;width:1px;height:20px"></div>
<div class="k1" style="left:832px;top:467px;width:50px;height:1px"></div>
<div class="k1" style="left:881px;top:446px;width:1px;height:22px"></div>
<div class="k31" style="left:836px;top:451.53px">0</div>
<div class="k0" style="left:860px;top:448px;width:20px;height:18px"></div>
<div class="k0" style="left:860px;top:448px;width:20px;height:1px"></div>
<div class="k0" style="left:860px;top:448px;width:1px;height:18px"></div>
<div class="k3" style="left:860px;top:465px;width:20px;height:1px"></div>
<div class="k3" style="left:879px;top:448px;width:1px;height:18px"></div>
<div class="k1" style="left:861px;top:449px;width:18px;height:1px"></div>
<div class="k1" style="left:861px;top:449px;width:1px;height:16px"></div>
<div class="k2" style="left:861px;top:464px;width:18px;height:1px"></div>
<div class="k2" style="left:878px;top:449px;width:1px;height:16px"></div>
<div class="k3" style="left:860px;top:465px;width:20px;height:1px"></div>
<div class="k3" style="left:879px;top:448px;width:1px;height:18px"></div>
<svg style="left:866px;top:456px" width="8" height="5"><path d="M0 0H7L3.5 4Z" fill="#000"/></svg>
<div class="k1" style="left:1006px;top:446px;width:50px;height:22px"></div>
<div class="k2" style="left:1006px;top:446px;width:50px;height:1px"></div>
<div class="k2" style="left:1006px;top:446px;width:1px;height:22px"></div>
<div class="k3" style="left:1007px;top:447px;width:48px;height:1px"></div>
<div class="k3" style="left:1007px;top:447px;width:1px;height:20px"></div>
<div class="k0" style="left:1007px;top:466px;width:48px;height:1px"></div>
<div class="k0" style="left:1054px;top:447px;width:1px;height:20px"></div>
<div class="k1" style="left:1006px;top:467px;width:50px;height:1px"></div>
<div class="k1" style="left:1055px;top:446px;width:1px;height:22px"></div>
<div class="k31" style="left:1010px;top:451.53px">Z</div>
<div class="k0" style="left:1034px;top:448px;width:20px;height:18px"></div>
<div class="k0" style="left:1034px;top:448px;width:20px;height:1px"></div>
<div class="k0" style="left:1034px;top:448px;width:1px;height:18px"></div>
<div class="k3" style="left:1034px;top:465px;width:20px;height:1px"></div>
<div class="k3" style="left:1053px;top:448px;width:1px;height:18px"></div>
<div class="k1" style="left:1035px;top:449px;width:18px;height:1px"></div>
<div class="k1" style="left:1035px;top:449px;width:1px;height:16px"></div>
<div class="k2" style="left:1035px;top:464px;width:18px;height:1px"></div>
<div class="k2" style="left:1052px;top:449px;width:1px;height:16px"></div>
<div class="k3" style="left:1034px;top:465px;width:20px;height:1px"></div>
<div class="k3" style="left:1053px;top:448px;width:1px;height:18px"></div>
<svg style="left:1040px;top:456px" width="8" height="5"><path d="M0 0H7L3.5 4Z" fill="#000"/></svg>
<div class="k28" style="left:888px;top:475px;width:16px;height:8px"></div>
<div class="k1" style="left:889px;top:476px;width:14px;height:6px"></div>
<div class="k28" style="left:985px;top:475px;width:14px;height:8px"></div>
<div class="k1" style="left:985px;top:476px;width:13px;height:6px"></div>
<div class="k29" style="left:911px;top:478.46px">14</div>
<div class="k30" style="left:940px;top:478.46px">27</div>
<div class="k1" style="left:832px;top:468px;width:50px;height:22px"></div>
<div class="k2" style="left:832px;top:468px;width:50px;height:1px"></div>
<div class="k2" style="left:832px;top:468px;width:1px;height:22px"></div>
<div class="k3" style="left:833px;top:469px;width:48px;height:1px"></div>
<div class="k3" style="left:833px;top:469px;width:1px;height:20px"></div>
<div class="k0" style="left:833px;top:488px;width:48px;height:1px"></div>
<div class="k0" style="left:880px;top:469px;width:1px;height:20px"></div>
<div class="k1" style="left:832px;top:489px;width:50px;height:1px"></div>
<div class="k1" style="left:881px;top:468px;width:1px;height:22px"></div>
<div class="k31" style="left:836px;top:473.53px">0</div>
<div class="k0" style="left:860px;top:470px;width:20px;height:18px"></div>
<div class="k0" style="left:860px;top:470px;width:20px;height:1px"></div>
<div class="k0" style="left:860px;top:470px;width:1px;height:18px"></div>
<div class="k3" style="left:860px;top:487px;width:20px;height:1px"></div>
<div class="k3" style="left:879px;top:470px;width:1px;height:18px"></div>
<div class="k1" style="left:861px;top:471px;width:18px;height:1px"></div>
<div class="k1" style="left:861px;top:471px;width:1px;height:16px"></div>
<div class="k2" style="left:861px;top:486px;width:18px;height:1px"></div>
<div class="k2" style="left:878px;top:471px;width:1px;height:16px"></div>
<div class="k3" style="left:860px;top:487px;width:20px;height:1px"></div>
<div class="k3" style="left:879px;top:470px;width:1px;height:18px"></div>
<svg style="left:866px;top:478px" width="8" height="5"><path d="M0 0H7L3.5 4Z" fill="#000"/></svg>
<div class="k1" style="left:1006px;top:468px;width:50px;height:22px"></div>
<div class="k2" style="left:1006px;top:468px;width:50px;height:1px"></div>
<div class="k2" style="left:1006px;top:468px;width:1px;height:22px"></div>
<div class="k3" style="left:1007px;top:469px;width:48px;height:1px"></div>
<div class="k3" style="left:1007px;top:469px;width:1px;height:20px"></div>
<div class="k0" style="left:1007px;top:488px;width:48px;height:1px"></div>
<div class="k0" style="left:1054px;top:469px;width:1px;height:20px"></div>
<div class="k1" style="left:1006px;top:489px;width:50px;height:1px"></div>
<div class="k1" style="left:1055px;top:468px;width:1px;height:22px"></div>
<div class="k31" style="left:1010px;top:473.53px">Z</div>
<div class="k0" style="left:1034px;top:470px;width:20px;height:18px"></div>
<div class="k0" style="left:1034px;top:470px;width:20px;height:1px"></div>
<div class="k0" style="left:1034px;top:470px;width:1px;height:18px"></div>
<div class="k3" style="left:1034px;top:487px;width:20px;height:1px"></div>
<div class="k3" style="left:1053px;top:470px;width:1px;height:18px"></div>
<div class="k1" style="left:1035px;top:471px;width:18px;height:1px"></div>
<div class="k1" style="left:1035px;top:471px;width:1px;height:16px"></div>
<div class="k2" style="left:1035px;top:486px;width:18px;height:1px"></div>
<div class="k2" style="left:1052px;top:471px;width:1px;height:16px"></div>
<div class="k3" style="left:1034px;top:487px;width:20px;height:1px"></div>
<div class="k3" style="left:1053px;top:470px;width:1px;height:18px"></div>
<svg style="left:1040px;top:478px" width="8" height="5"><path d="M0 0H7L3.5 4Z" fill="#000"/></svg>
<div class="k28" style="left:888px;top:497px;width:16px;height:8px"></div>
<div class="k1" style="left:889px;top:498px;width:14px;height:6px"></div>
<div class="k28" style="left:985px;top:497px;width:14px;height:8px"></div>
<div class="k1" style="left:985px;top:498px;width:13px;height:6px"></div>
<div class="k29" style="left:911px;top:500.46px">15</div>
<div class="k30" style="left:940px;top:500.46px">26</div>
<div class="k1" style="left:832px;top:490px;width:50px;height:22px"></div>
<div class="k2" style="left:832px;top:490px;width:50px;height:1px"></div>
<div class="k2" style="left:832px;top:490px;width:1px;height:22px"></div>
<div class="k3" style="left:833px;top:491px;width:48px;height:1px"></div>
<div class="k3" style="left:833px;top:491px;width:1px;height:20px"></div>
<div class="k0" style="left:833px;top:510px;width:48px;height:1px"></div>
<div class="k0" style="left:880px;top:491px;width:1px;height:20px"></div>
<div class="k1" style="left:832px;top:511px;width:50px;height:1px"></div>
<div class="k1" style="left:881px;top:490px;width:1px;height:22px"></div>
<div class="k31" style="left:836px;top:495.53px">0</div>
<div class="k0" style="left:860px;top:492px;width:20px;height:18px"></div>
<div class="k0" style="left:860px;top:492px;width:20px;height:1px"></div>
<div class="k0" style="left:860px;top:492px;width:1px;height:18px"></div>
<div class="k3" style="left:860px;top:509px;width:20px;height:1px"></div>
<div class="k3" style="left:879px;top:492px;width:1px;height:18px"></div>
<div class="k1" style="left:861px;top:493px;width:18px;height:1px"></div>
<div class="k1" style="left:861px;top:493px;width:1px;height:16px"></div>
<div class="k2" style="left:861px;top:508px;width:18px;height:1px"></div>
<div class="k2" style="left:878px;top:493px;width:1px;height:16px"></div>
<div class="k3" style="left:860px;top:509px;width:20px;height:1px"></div>
<div class="k3" style="left:879px;top:492px;width:1px;height:18px"></div>
<svg style="left:866px;top:500px" width="8" height="5"><path d="M0 0H7L3.5 4Z" fill="#000"/></svg>
<div class="k1" style="left:1006px;top:490px;width:50px;height:22px"></div>
<div class="k2" style="left:1006px;top:490px;width:50px;height:1px"></div>
<div class="k2" style="left:1006px;top:490px;width:1px;height:22px"></div>
<div class="k3" style="left:1007px;top:491px;width:48px;height:1px"></div>
<div class="k3" style="left:1007px;top:491px;width:1px;height:20px"></div>
<div class="k0" style="left:1007px;top:510px;width:48px;height:1px"></div>
<div class="k0" style="left:1054px;top:491px;width:1px;height:20px"></div>
<div class="k1" style="left:1006px;top:511px;width:50px;height:1px"></div>
<div class="k1" style="left:1055px;top:490px;width:1px;height:22px"></div>
<div class="k31" style="left:1010px;top:495.53px">V</div>
<div class="k0" style="left:1034px;top:492px;width:20px;height:18px"></div>
<div class="k0" style="left:1034px;top:492px;width:20px;height:1px"></div>
<div class="k0" style="left:1034px;top:492px;width:1px;height:18px"></div>
<div class="k3" style="left:1034px;top:509px;width:20px;height:1px"></div>
<div class="k3" style="left:1053px;top:492px;width:1px;height:18px"></div>
<div class="k1" style="left:1035px;top:493px;width:18px;height:1px"></div>
<div class="k1" style="left:1035px;top:493px;width:1px;height:16px"></div>
<div class="k2" style="left:1035px;top:508px;width:18px;height:1px"></div>
<div class="k2" style="left:1052px;top:493px;width:1px;height:16px"></div>
<div class="k3" style="left:1034px;top:509px;width:20px;height:1px"></div>
<div class="k3" style="left:1053px;top:492px;width:1px;height:18px"></div>
<svg style="left:1040px;top:500px" width="8" height="5"><path d="M0 0H7L3.5 4Z" fill="#000"/></svg>
<div class="k28" style="left:888px;top:519px;width:16px;height:8px"></div>
<div class="k1" style="left:889px;top:520px;width:14px;height:6px"></div>
<div class="k28" style="left:985px;top:519px;width:14px;height:8px"></div>
<div class="k1" style="left:985px;top:520px;width:13px;height:6px"></div>
<div class="k29" style="left:911px;top:522.46px">16</div>
<div class="k30" style="left:940px;top:522.46px">25</div>
<div class="k1" style="left:832px;top:512px;width:50px;height:22px"></div>
<div class="k2" style="left:832px;top:512px;width:50px;height:1px"></div>
<div class="k2" style="left:832px;top:512px;width:1px;height:22px"></div>
<div class="k3" style="left:833px;top:513px;width:48px;height:1px"></div>
<div class="k3" style="left:833px;top:513px;width:1px;height:20px"></div>
<div class="k0" style="left:833px;top:532px;width:48px;height:1px"></div>
<div class="k0" style="left:880px;top:513px;width:1px;height:20px"></div>
<div class="k1" style="left:832px;top:533px;width:50px;height:1px"></div>
<div class="k1" style="left:881px;top:512px;width:1px;height:22px"></div>
<div class="k31" style="left:836px;top:517.53px">0</div>
<div class="k0" style="left:860px;top:514px;width:20px;height:18px"></div>
<div class="k0" style="left:860px;top:514px;width:20px;height:1px"></div>
<div class="k0" style="left:860px;top:514px;width:1px;height:18px"></div>
<div class="k3" style="left:860px;top:531px;width:20px;height:1px"></div>
<div class="k3" style="left:879px;top:514px;width:1px;height:18px"></div>
<div class="k1" style="left:861px;top:515px;width:18px;height:1px"></div>
<div class="k1" style="left:861px;top:515px;width:1px;height:16px"></div>
<div class="k2" style="left:861px;top:530px;width:18px;height:1px"></div>
<div class="k2" style="left:878px;top:515px;width:1px;height:16px"></div>
<div class="k3" style="left:860px;top:531px;width:20px;height:1px"></div>
<div class="k3" style="left:879px;top:514px;width:1px;height:18px"></div>
<svg style="left:866px;top:522px" width="8" height="5"><path d="M0 0H7L3.5 4Z" fill="#000"/></svg>
<div class="k1" style="left:1006px;top:512px;width:50px;height:22px"></div>
<div class="k2" style="left:1006px;top:512px;width:50px;height:1px"></div>
<div class="k2" style="left:1006px;top:512px;width:1px;height:22px"></div>
<div class="k3" style="left:1007px;top:513px;width:48px;height:1px"></div>
<div class="k3" style="left:1007px;top:513px;width:1px;height:20px"></div>
<div class="k0" style="left:1007px;top:532px;width:48px;height:1px"></div>
<div class="k0" style="left:1054px;top:513px;width:1px;height:20px"></div>
<div class="k1" style="left:1006px;top:533px;width:50px;height:1px"></div>
<div class="k1" style="left:1055px;top:512px;width:1px;height:22px"></div>
<div class="k31" style="left:1010px;top:517.53px">0</div>
<div class="k0" style="left:1034px;top:514px;width:20px;height:18px"></div>
<div class="k0" style="left:1034px;top:514px;width:20px;height:1px"></div>
<div class="k0" style="left:1034px;top:514px;width:1px;height:18px"></div>
<div class="k3" style="left:1034px;top:531px;width:20px;height:1px"></div>
<div class="k3" style="left:1053px;top:514px;width:1px;height:18px"></div>
<div class="k1" style="left:1035px;top:515px;width:18px;height:1px"></div>
<div class="k1" style="left:1035px;top:515px;width:1px;height:16px"></div>
<div class="k2" style="left:1035px;top:530px;width:18px;height:1px"></div>
<div class="k2" style="left:1052px;top:515px;width:1px;height:16px"></div>
<div class="k3" style="left:1034px;top:531px;width:20px;height:1px"></div>
<div class="k3" style="left:1053px;top:514px;width:1px;height:18px"></div>
<svg style="left:1040px;top:522px" width="8" height="5"><path d="M0 0H7L3.5 4Z" fill="#000"/></svg>
<div class="k28" style="left:888px;top:541px;width:16px;height:8px"></div>
<div class="k1" style="left:889px;top:542px;width:14px;height:6px"></div>
<div class="k28" style="left:985px;top:541px;width:14px;height:8px"></div>
<div class="k1" style="left:985px;top:542px;width:13px;height:6px"></div>
<div class="k29" style="left:911px;top:544.46px">17</div>
<div class="k30" style="left:940px;top:544.46px">24</div>
<div class="k1" style="left:832px;top:534px;width:50px;height:22px"></div>
<div class="k2" style="left:832px;top:534px;width:50px;height:1px"></div>
<div class="k2" style="left:832px;top:534px;width:1px;height:22px"></div>
<div class="k3" style="left:833px;top:535px;width:48px;height:1px"></div>
<div class="k3" style="left:833px;top:535px;width:1px;height:20px"></div>
<div class="k0" style="left:833px;top:554px;width:48px;height:1px"></div>
<div class="k0" style="left:880px;top:535px;width:1px;height:20px"></div>
<div class="k1" style="left:832px;top:555px;width:50px;height:1px"></div>
<div class="k1" style="left:881px;top:534px;width:1px;height:22px"></div>
<div class="k31" style="left:836px;top:539.53px">0</div>
<div class="k0" style="left:860px;top:536px;width:20px;height:18px"></div>
<div class="k0" style="left:860px;top:536px;width:20px;height:1px"></div>
<div class="k0" style="left:860px;top:536px;width:1px;height:18px"></div>
<div class="k3" style="left:860px;top:553px;width:20px;height:1px"></div>
<div class="k3" style="left:879px;top:536px;width:1px;height:18px"></div>
<div class="k1" style="left:861px;top:537px;width:18px;height:1px"></div>
<div class="k1" style="left:861px;top:537px;width:1px;height:16px"></div>
<div class="k2" style="left:861px;top:552px;width:18px;height:1px"></div>
<div class="k2" style="left:878px;top:537px;width:1px;height:16px"></div>
<div class="k3" style="left:860px;top:553px;width:20px;height:1px"></div>
<div class="k3" style="left:879px;top:536px;width:1px;height:18px"></div>
<svg style="left:866px;top:544px" width="8" height="5"><path d="M0 0H7L3.5 4Z" fill="#000"/></svg>
<div class="k1" style="left:1006px;top:534px;width:50px;height:22px"></div>
<div class="k2" style="left:1006px;top:534px;width:50px;height:1px"></div>
<div class="k2" style="left:1006px;top:534px;width:1px;height:22px"></div>
<div class="k3" style="left:1007px;top:535px;width:48px;height:1px"></div>
<div class="k3" style="left:1007px;top:535px;width:1px;height:20px"></div>
<div class="k0" style="left:1007px;top:554px;width:48px;height:1px"></div>
<div class="k0" style="left:1054px;top:535px;width:1px;height:20px"></div>
<div class="k1" style="left:1006px;top:555px;width:50px;height:1px"></div>
<div class="k1" style="left:1055px;top:534px;width:1px;height:22px"></div>
<div class="k31" style="left:1010px;top:539.53px">0</div>
<div class="k0" style="left:1034px;top:536px;width:20px;height:18px"></div>
<div class="k0" style="left:1034px;top:536px;width:20px;height:1px"></div>
<div class="k0" style="left:1034px;top:536px;width:1px;height:18px"></div>
<div class="k3" style="left:1034px;top:553px;width:20px;height:1px"></div>
<div class="k3" style="left:1053px;top:536px;width:1px;height:18px"></div>
<div class="k1" style="left:1035px;top:537px;width:18px;height:1px"></div>
<div class="k1" style="left:1035px;top:537px;width:1px;height:16px"></div>
<div class="k2" style="left:1035px;top:552px;width:18px;height:1px"></div>
<div class="k2" style="left:1052px;top:537px;width:1px;height:16px"></div>
<div class="k3" style="left:1034px;top:553px;width:20px;height:1px"></div>
<div class="k3" style="left:1053px;top:536px;width:1px;height:18px"></div>
<svg style="left:1040px;top:544px" width="8" height="5"><path d="M0 0H7L3.5 4Z" fill="#000"/></svg>
<div class="k28" style="left:888px;top:563px;width:16px;height:8px"></div>
<div class="k1" style="left:889px;top:564px;width:14px;height:6px"></div>
<div class="k28" style="left:985px;top:563px;width:14px;height:8px"></div>
<div class="k1" style="left:985px;top:564px;width:13px;height:6px"></div>
<div class="k29" style="left:911px;top:566.46px">18</div>
<div class="k30" style="left:940px;top:566.46px">23</div>
<div class="k1" style="left:832px;top:556px;width:50px;height:22px"></div>
<div class="k2" style="left:832px;top:556px;width:50px;height:1px"></div>
<div class="k2" style="left:832px;top:556px;width:1px;height:22px"></div>
<div class="k3" style="left:833px;top:557px;width:48px;height:1px"></div>
<div class="k3" style="left:833px;top:557px;width:1px;height:20px"></div>
<div class="k0" style="left:833px;top:576px;width:48px;height:1px"></div>
<div class="k0" style="left:880px;top:557px;width:1px;height:20px"></div>
<div class="k1" style="left:832px;top:577px;width:50px;height:1px"></div>
<div class="k1" style="left:881px;top:556px;width:1px;height:22px"></div>
<div class="k31" style="left:836px;top:561.53px">0</div>
<div class="k0" style="left:860px;top:558px;width:20px;height:18px"></div>
<div class="k0" style="left:860px;top:558px;width:20px;height:1px"></div>
<div class="k0" style="left:860px;top:558px;width:1px;height:18px"></div>
<div class="k3" style="left:860px;top:575px;width:20px;height:1px"></div>
<div class="k3" style="left:879px;top:558px;width:1px;height:18px"></div>
<div class="k1" style="left:861px;top:559px;width:18px;height:1px"></div>
<div class="k1" style="left:861px;top:559px;width:1px;height:16px"></div>
<div class="k2" style="left:861px;top:574px;width:18px;height:1px"></div>
<div class="k2" style="left:878px;top:559px;width:1px;height:16px"></div>
<div class="k3" style="left:860px;top:575px;width:20px;height:1px"></div>
<div class="k3" style="left:879px;top:558px;width:1px;height:18px"></div>
<svg style="left:866px;top:566px" width="8" height="5"><path d="M0 0H7L3.5 4Z" fill="#000"/></svg>
<div class="k1" style="left:1006px;top:556px;width:50px;height:22px"></div>
<div class="k2" style="left:1006px;top:556px;width:50px;height:1px"></div>
<div class="k2" style="left:1006px;top:556px;width:1px;height:22px"></div>
<div class="k3" style="left:1007px;top:557px;width:48px;height:1px"></div>
<div class="k3" style="left:1007px;top:557px;width:1px;height:20px"></div>
<div class="k0" style="left:1007px;top:576px;width:48px;height:1px"></div>
<div class="k0" style="left:1054px;top:557px;width:1px;height:20px"></div>
<div class="k1" style="left:1006px;top:577px;width:50px;height:1px"></div>
<div class="k1" style="left:1055px;top:556px;width:1px;height:22px"></div>
<div class="k31" style="left:1010px;top:561.53px">0</div>
<div class="k0" style="left:1034px;top:558px;width:20px;height:18px"></div>
<div class="k0" style="left:1034px;top:558px;width:20px;height:1px"></div>
<div class="k0" style="left:1034px;top:558px;width:1px;height:18px"></div>
<div class="k3" style="left:1034px;top:575px;width:20px;height:1px"></div>
<div class="k3" style="left:1053px;top:558px;width:1px;height:18px"></div>
<div class="k1" style="left:1035px;top:559px;width:18px;height:1px"></div>
<div class="k1" style="left:1035px;top:559px;width:1px;height:16px"></div>
<div class="k2" style="left:1035px;top:574px;width:18px;height:1px"></div>
<div class="k2" style="left:1052px;top:559px;width:1px;height:16px"></div>
<div class="k3" style="left:1034px;top:575px;width:20px;height:1px"></div>
<div class="k3" style="left:1053px;top:558px;width:1px;height:18px"></div>
<svg style="left:1040px;top:566px" width="8" height="5"><path d="M0 0H7L3.5 4Z" fill="#000"/></svg>
<div class="k28" style="left:888px;top:585px;width:16px;height:8px"></div>
<div class="k1" style="left:889px;top:586px;width:14px;height:6px"></div>
<div class="k28" style="left:985px;top:585px;width:14px;height:8px"></div>
<div class="k1" style="left:985px;top:586px;width:13px;height:6px"></div>
<div class="k29" style="left:911px;top:588.46px">19</div>
<div class="k30" style="left:940px;top:588.46px">22</div>
<div class="k1" style="left:832px;top:578px;width:50px;height:22px"></div>
<div class="k2" style="left:832px;top:578px;width:50px;height:1px"></div>
<div class="k2" style="left:832px;top:578px;width:1px;height:22px"></div>
<div class="k3" style="left:833px;top:579px;width:48px;height:1px"></div>
<div class="k3" style="left:833px;top:579px;width:1px;height:20px"></div>
<div class="k0" style="left:833px;top:598px;width:48px;height:1px"></div>
<div class="k0" style="left:880px;top:579px;width:1px;height:20px"></div>
<div class="k1" style="left:832px;top:599px;width:50px;height:1px"></div>
<div class="k1" style="left:881px;top:578px;width:1px;height:22px"></div>
<div class="k31" style="left:836px;top:583.53px">0</div>
<div class="k0" style="left:860px;top:580px;width:20px;height:18px"></div>
<div class="k0" style="left:860px;top:580px;width:20px;height:1px"></div>
<div class="k0" style="left:860px;top:580px;width:1px;height:18px"></div>
<div class="k3" style="left:860px;top:597px;width:20px;height:1px"></div>
<div class="k3" style="left:879px;top:580px;width:1px;height:18px"></div>
<div class="k1" style="left:861px;top:581px;width:18px;height:1px"></div>
<div class="k1" style="left:861px;top:581px;width:1px;height:16px"></div>
<div class="k2" style="left:861px;top:596px;width:18px;height:1px"></div>
<div class="k2" style="left:878px;top:581px;width:1px;height:16px"></div>
<div class="k3" style="left:860px;top:597px;width:20px;height:1px"></div>
<div class="k3" style="left:879px;top:580px;width:1px;height:18px"></div>
<svg style="left:866px;top:588px" width="8" height="5"><path d="M0 0H7L3.5 4Z" fill="#000"/></svg>
<div class="k1" style="left:1006px;top:578px;width:50px;height:22px"></div>
<div class="k2" style="left:1006px;top:578px;width:50px;height:1px"></div>
<div class="k2" style="left:1006px;top:578px;width:1px;height:22px"></div>
<div class="k3" style="left:1007px;top:579px;width:48px;height:1px"></div>
<div class="k3" style="left:1007px;top:579px;width:1px;height:20px"></div>
<div class="k0" style="left:1007px;top:598px;width:48px;height:1px"></div>
<div class="k0" style="left:1054px;top:579px;width:1px;height:20px"></div>
<div class="k1" style="left:1006px;top:599px;width:50px;height:1px"></div>
<div class="k1" style="left:1055px;top:578px;width:1px;height:22px"></div>
<div class="k31" style="left:1010px;top:583.53px">0</div>
<div class="k0" style="left:1034px;top:580px;width:20px;height:18px"></div>
<div class="k0" style="left:1034px;top:580px;width:20px;height:1px"></div>
<div class="k0" style="left:1034px;top:580px;width:1px;height:18px"></div>
<div class="k3" style="left:1034px;top:597px;width:20px;height:1px"></div>
<div class="k3" style="left:1053px;top:580px;width:1px;height:18px"></div>
<div class="k1" style="left:1035px;top:581px;width:18px;height:1px"></div>
<div class="k1" style="left:1035px;top:581px;width:1px;height:16px"></div>
<div class="k2" style="left:1035px;top:596px;width:18px;height:1px"></div>
<div class="k2" style="left:1052px;top:581px;width:1px;height:16px"></div>
<div class="k3" style="left:1034px;top:597px;width:20px;height:1px"></div>
<div class="k3" style="left:1053px;top:580px;width:1px;height:18px"></div>
<svg style="left:1040px;top:588px" width="8" height="5"><path d="M0 0H7L3.5 4Z" fill="#000"/></svg>
<div class="k28" style="left:888px;top:607px;width:16px;height:8px"></div>
<div class="k1" style="left:889px;top:608px;width:14px;height:6px"></div>
<div class="k28" style="left:985px;top:607px;width:14px;height:8px"></div>
<div class="k1" style="left:985px;top:608px;width:13px;height:6px"></div>
<div class="k29" style="left:911px;top:610.46px">20</div>
<div class="k30" style="left:940px;top:610.46px">21</div>
<div class="k1" style="left:832px;top:600px;width:50px;height:22px"></div>
<div class="k2" style="left:832px;top:600px;width:50px;height:1px"></div>
<div class="k2" style="left:832px;top:600px;width:1px;height:22px"></div>
<div class="k3" style="left:833px;top:601px;width:48px;height:1px"></div>
<div class="k3" style="left:833px;top:601px;width:1px;height:20px"></div>
<div class="k0" style="left:833px;top:620px;width:48px;height:1px"></div>
<div class="k0" style="left:880px;top:601px;width:1px;height:20px"></div>
<div class="k1" style="left:832px;top:621px;width:50px;height:1px"></div>
<div class="k1" style="left:881px;top:600px;width:1px;height:22px"></div>
<div class="k31" style="left:836px;top:605.53px">0</div>
<div class="k0" style="left:860px;top:602px;width:20px;height:18px"></div>
<div class="k0" style="left:860px;top:602px;width:20px;height:1px"></div>
<div class="k0" style="left:860px;top:602px;width:1px;height:18px"></div>
<div class="k3" style="left:860px;top:619px;width:20px;height:1px"></div>
<div class="k3" style="left:879px;top:602px;width:1px;height:18px"></div>
<div class="k1" style="left:861px;top:603px;width:18px;height:1px"></div>
<div class="k1" style="left:861px;top:603px;width:1px;height:16px"></div>
<div class="k2" style="left:861px;top:618px;width:18px;height:1px"></div>
<div class="k2" style="left:878px;top:603px;width:1px;height:16px"></div>
<div class="k3" style="left:860px;top:619px;width:20px;height:1px"></div>
<div class="k3" style="left:879px;top:602px;width:1px;height:18px"></div>
<svg style="left:866px;top:610px" width="8" height="5"><path d="M0 0H7L3.5 4Z" fill="#000"/></svg>
<div class="k1" style="left:1006px;top:600px;width:50px;height:22px"></div>
<div class="k2" style="left:1006px;top:600px;width:50px;height:1px"></div>
<div class="k2" style="left:1006px;top:600px;width:1px;height:22px"></div>
<div class="k3" style="left:1007px;top:601px;width:48px;height:1px"></div>
<div class="k3" style="left:1007px;top:601px;width:1px;height:20px"></div>
<div class="k0" style="left:1007px;top:620px;width:48px;height:1px"></div>
<div class="k0" style="left:1054px;top:601px;width:1px;height:20px"></div>
<div class="k1" style="left:1006px;top:621px;width:50px;height:1px"></div>
<div class="k1" style="left:1055px;top:600px;width:1px;height:22px"></div>
<div class="k31" style="left:1010px;top:605.53px">0</div>
<div class="k0" style="left:1034px;top:602px;width:20px;height:18px"></div>
<div class="k0" style="left:1034px;top:602px;width:20px;height:1px"></div>
<div class="k0" style="left:1034px;top:602px;width:1px;height:18px"></div>
<div class="k3" style="left:1034px;top:619px;width:20px;height:1px"></div>
<div class="k3" style="left:1053px;top:602px;width:1px;height:18px"></div>
<div class="k1" style="left:1035px;top:603px;width:18px;height:1px"></div>
<div class="k1" style="left:1035px;top:603px;width:1px;height:16px"></div>
<div class="k2" style="left:1035px;top:618px;width:18px;height:1px"></div>
<div class="k2" style="left:1052px;top:603px;width:1px;height:16px"></div>
<div class="k3" style="left:1034px;top:619px;width:20px;height:1px"></div>
<div class="k3" style="left:1053px;top:602px;width:1px;height:18px"></div>
<svg style="left:1040px;top:610px" width="8" height="5"><path d="M0 0H7L3.5 4Z" fill="#000"/></svg>
</body></html>
